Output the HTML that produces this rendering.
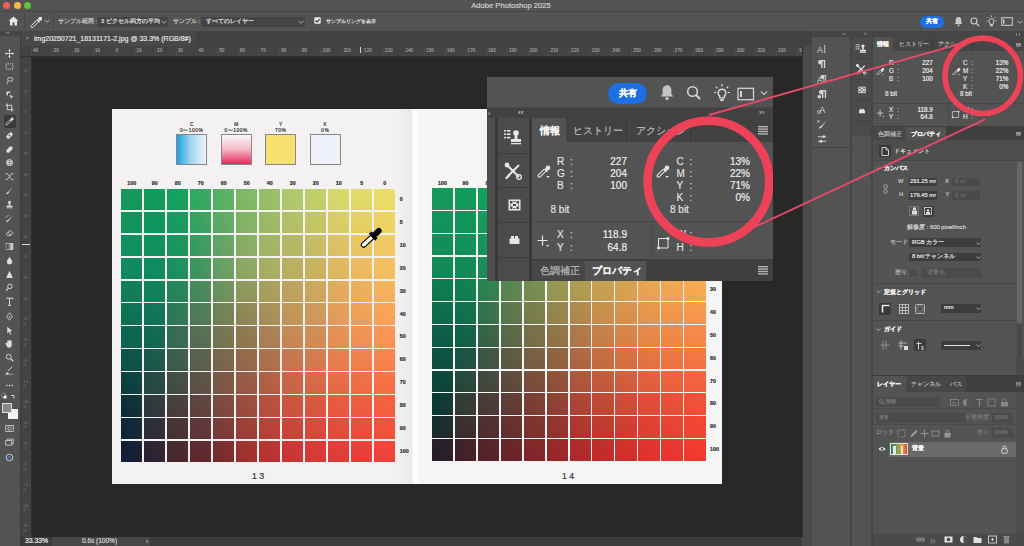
<!DOCTYPE html>
<html><head><meta charset="utf-8">
<style>
*{margin:0;padding:0;box-sizing:border-box}
html,body{width:1024px;height:546px;overflow:hidden;background:#282828;font-family:"Liberation Sans",sans-serif;color:#d8d8d8;position:relative}
.a{position:absolute}
.t{position:absolute;white-space:nowrap;line-height:1;-webkit-text-stroke:0.18px currentColor}
.cl{position:absolute;width:21.4px;height:21.3px}
</style></head><body>

<div class="a" style="left:0px;top:0px;width:1024px;height:11px;background:#535353;"></div>
<div class="a" style="left:3.0px;top:1.8px;width:7px;height:7px;background:#ee5f57;border-radius:50%"></div>
<div class="a" style="left:13.5px;top:1.8px;width:7px;height:7px;background:#f5bd3c;border-radius:50%"></div>
<div class="a" style="left:24.0px;top:1.8px;width:7px;height:7px;background:#5fc53f;border-radius:50%"></div>
<div class="t" style="left:361px;width:300px;text-align:center;top:2.00px;font-size:7.6px;color:#d2d2d2;">Adobe Photoshop 2025</div>
<div class="a" style="left:0px;top:11px;width:1024px;height:20px;background:#535353;"></div>
<div class="a" style="left:0px;top:10.8px;width:1024px;height:1.2px;background:#474747;"></div>
<div class="a" style="left:0px;top:30.6px;width:1024px;height:0.8px;background:#454545;"></div>
<svg class="a" style="left:8px;top:16px" width="11" height="10" viewBox="0 0 11 10"><path d="M5.5 0.5L0.5 5h1.5v4.5h2.5V6.5h2v3h2.5V5h1.5z" fill="#e8e8e8"/></svg>
<div class="a" style="left:24px;top:13px;width:0.8px;height:16px;background:#474747;"></div>
<svg class="a" style="left:30px;top:15.5px" width="12" height="12" viewBox="0 0 12 12"><circle cx="10.3" cy="2.8" r="2" fill="#e6e6e6"/><path d="M7 3.6l2.6 2.6" stroke="#e6e6e6" stroke-width="1.8"/><path d="M8.1 6.2L3 11.3a1.2 1.2 0 0 1-1.7-1.7L6.4 4.5" fill="none" stroke="#e6e6e6" stroke-width="1"/></svg>
<svg class="a" style="left:44px;top:19px" width="6" height="4" viewBox="0 0 6 4"><path d="M0.5 0.8l2.5 2.5 2.5-2.5" fill="none" stroke="#bbb" stroke-width="0.9"/></svg>
<div class="a" style="left:53px;top:13px;width:0.8px;height:16px;background:#474747;"></div>
<div class="t" style="left:58px;top:18.90px;font-size:5.6px;color:#c8c8c8;">サンプル範囲 :</div>
<div class="a" style="left:97px;top:16.5px;width:71px;height:10px;background:#444444;border-radius:1.5px"></div>
<div class="t" style="left:101px;top:19.15px;font-size:5.5px;color:#e6e6e6;">3 ピクセル四方の平均</div>
<svg class="a" style="left:161px;top:20px" width="6" height="4" viewBox="0 0 6 4"><path d="M0.5 0.8l2.5 2.5 2.5-2.5" fill="none" stroke="#bbb" stroke-width="0.9"/></svg>
<div class="t" style="left:173px;top:18.90px;font-size:5.6px;color:#c8c8c8;">サンプル :</div>
<div class="a" style="left:201px;top:16.5px;width:104px;height:10px;background:#444444;border-radius:1.5px"></div>
<div class="t" style="left:205.5px;top:19.15px;font-size:5.5px;color:#e6e6e6;">すべてのレイヤー</div>
<svg class="a" style="left:298px;top:20px" width="6" height="4" viewBox="0 0 6 4"><path d="M0.5 0.8l2.5 2.5 2.5-2.5" fill="none" stroke="#bbb" stroke-width="0.9"/></svg>
<svg class="a" style="left:314px;top:17.3px" width="7" height="7" viewBox="0 0 7 7"><rect x="0.3" y="0.3" width="6.4" height="6.4" rx="1" fill="#e8e8e8"/><path d="M1.6 3.5l1.4 1.4 2.6-2.8" fill="none" stroke="#333" stroke-width="1.1"/></svg>
<div class="t" style="left:325.5px;top:19.00px;font-size:5.4px;color:#e6e6e6;">サンプルリングを表示</div>
<div class="a" style="left:920px;top:16px;width:24px;height:11.5px;background:#1d6fe3;border-radius:6px"></div>
<div class="t" style="left:782px;width:300px;text-align:center;top:18.90px;font-size:5.8px;color:#fff;font-weight:bold">共有</div>
<svg class="a" style="left:953.5px;top:15.5px" width="9" height="11" viewBox="0 0 9 11"><path d="M4.5 1c-1.8 0-2.8 1.4-2.8 3v2.5L0.8 8h7.4L7.3 6.5V4C7.3 2.4 6.3 1 4.5 1z" fill="#c8c8c8"/><circle cx="4.5" cy="9.3" r="1" fill="#c8c8c8"/></svg>
<svg class="a" style="left:970px;top:16.5px" width="10" height="10" viewBox="0 0 10 10"><circle cx="4" cy="4" r="3" fill="none" stroke="#d0d0d0" stroke-width="1.1"/><path d="M6.3 6.3L9 9" stroke="#d0d0d0" stroke-width="1.2"/></svg>
<svg class="a" style="left:986px;top:15px" width="11" height="12" viewBox="0 0 11 12"><path d="M5.5 3.6a2.5 2.5 0 0 0-1.5 4.5v1.3h3V8.1A2.5 2.5 0 0 0 5.5 3.6z" fill="none" stroke="#d8d8d8" stroke-width="0.9"/><rect x="4.3" y="10" width="2.4" height="1.3" fill="#d8d8d8"/><path d="M5.5 0.5v1.5M1.5 2l1 1M9.5 2l-1 1M0.5 6h1.3M9.2 6h1.3" stroke="#d8d8d8" stroke-width="0.8"/></svg>
<svg class="a" style="left:1001px;top:17px" width="12" height="9" viewBox="0 0 12 9"><rect x="0.7" y="0.7" width="10.6" height="7.6" fill="none" stroke="#d0d0d0" stroke-width="1"/><rect x="2" y="2.3" width="1.4" height="4.4" fill="#d0d0d0"/></svg>
<svg class="a" style="left:1017px;top:19.5px" width="6" height="4" viewBox="0 0 6 4"><path d="M0.5 0.8l2.5 2.5 2.5-2.5" fill="none" stroke="#bbb" stroke-width="0.9"/></svg>
<div class="a" style="left:0px;top:31px;width:20px;height:515px;background:#535353;"></div>
<div class="a" style="left:0px;top:31px;width:20px;height:5px;background:#454545;"></div>
<div class="t" style="left:6px;top:31.25px;font-size:4.5px;color:#999;">››</div>
<div class="a" style="left:20px;top:31px;width:1px;height:515px;background:#3a3a3a;"></div>
<div class="a" style="left:4px;top:115px;width:12px;height:13px;background:#3a3a3a;border-radius:1.5px"></div>
<svg class="a" style="left:4.5px;top:48.7px" width="9" height="9" viewBox="0 0 12 12"><path d="M6 1v10M1 6h10" stroke="#dcdcdc" stroke-width="1.3"/><path d="M6 0l2 2H4zM6 12l2-2H4zM0 6l2-2v4zM12 6l-2-2v4z" fill="#dcdcdc"/></svg>
<svg class="a" style="left:4.5px;top:61.5px" width="9" height="9" viewBox="0 0 12 12"><rect x="1.5" y="2.5" width="9" height="7" fill="none" stroke="#dcdcdc" stroke-width="1.1" stroke-dasharray="1.6 1"/></svg>
<svg class="a" style="left:4.5px;top:75.7px" width="9" height="9" viewBox="0 0 12 12"><ellipse cx="7" cy="4.5" rx="3.5" ry="2.6" fill="none" stroke="#dcdcdc" stroke-width="1.1"/><path d="M4 6.5c-1 1.5-2 3-1 4.5" fill="none" stroke="#dcdcdc" stroke-width="1.1"/></svg>
<svg class="a" style="left:4.5px;top:89.5px" width="9" height="9" viewBox="0 0 12 12"><path d="M2 2h5v2H4v3H2z" fill="#dcdcdc"/><path d="M6 6l5 3-2 .5-1 2z" fill="#dcdcdc"/></svg>
<svg class="a" style="left:4.5px;top:103.2px" width="9" height="9" viewBox="0 0 12 12"><path d="M3 0.5v8.5h8.5M0.5 3h8.5v8.5" fill="none" stroke="#dcdcdc" stroke-width="1.2"/></svg>
<svg class="a" style="left:4.5px;top:117.0px" width="9" height="9" viewBox="0 0 12 12"><circle cx="9.6" cy="2.6" r="1.9" fill="#dcdcdc"/><path d="M6.5 3.4l2.4 2.4" stroke="#dcdcdc" stroke-width="1.7"/><path d="M7.6 5.8L3 10.4a1.1 1.1 0 0 1-1.6-1.6L6 4.2" fill="none" stroke="#dcdcdc" stroke-width="1"/></svg>
<svg class="a" style="left:4.5px;top:131.0px" width="9" height="9" viewBox="0 0 12 12"><rect x="3.5" y="1" width="5" height="10" rx="2.5" transform="rotate(45 6 6)" fill="#dcdcdc"/><path d="M4.5 6h3M6 4.5v3" stroke="#535353" stroke-width="0.8"/></svg>
<svg class="a" style="left:4.5px;top:144.5px" width="9" height="9" viewBox="0 0 12 12"><rect x="3.5" y="1" width="5" height="10" rx="2.5" transform="rotate(45 6 6)" fill="#dcdcdc"/></svg>
<svg class="a" style="left:4.5px;top:158.0px" width="9" height="9" viewBox="0 0 12 12"><circle cx="6" cy="6" r="4.5" fill="#dcdcdc"/><path d="M2 6h8M6 2v8M3 3.5h6M3 8.5h6" stroke="#535353" stroke-width="0.6"/></svg>
<svg class="a" style="left:4.5px;top:172.0px" width="9" height="9" viewBox="0 0 12 12"><path d="M1 2c3 0 4 2 5 4s2 4 5 4M1 10c3 0 4-2 5-4s2-4 5-4" fill="none" stroke="#dcdcdc" stroke-width="1.2"/></svg>
<svg class="a" style="left:4.5px;top:186.0px" width="9" height="9" viewBox="0 0 12 12"><path d="M10.5 1L5 7l-1 1c-1 0-2 1-2.5 3 2 0 3-1 3.5-2l.5-1z" fill="#dcdcdc"/></svg>
<svg class="a" style="left:4.5px;top:200.0px" width="9" height="9" viewBox="0 0 12 12"><circle cx="6" cy="3" r="2" fill="#dcdcdc"/><rect x="5" y="4.5" width="2" height="3" fill="#dcdcdc"/><rect x="2" y="7.5" width="8" height="2" fill="#dcdcdc"/><rect x="2" y="10" width="8" height="1" fill="#dcdcdc"/></svg>
<svg class="a" style="left:4.5px;top:214.0px" width="9" height="9" viewBox="0 0 12 12"><path d="M10.5 1L5 7l-1 1c-1 0-2 1-2.5 3 2 0 3-1 3.5-2l.5-1z" fill="#dcdcdc"/><path d="M1 5l4-4" stroke="#dcdcdc" stroke-width="1"/></svg>
<svg class="a" style="left:4.5px;top:228.0px" width="9" height="9" viewBox="0 0 12 12"><path d="M1.5 8l5-5 4 4-3 3H3.5z" fill="none" stroke="#dcdcdc" stroke-width="1.1"/><path d="M4 5.5l4 4" stroke="#dcdcdc" stroke-width="1.1"/></svg>
<svg class="a" style="left:4.5px;top:242.0px" width="9" height="9" viewBox="0 0 12 12"><defs><linearGradient id="gg"><stop offset="0" stop-color="#222"/><stop offset="1" stop-color="#eee"/></linearGradient></defs><rect x="1.5" y="2" width="9" height="8" fill="url(#gg)" stroke="#dcdcdc" stroke-width="0.8"/></svg>
<svg class="a" style="left:4.5px;top:256.0px" width="9" height="9" viewBox="0 0 12 12"><path d="M6 1c1 2 3.5 4.5 3.5 6.5a3.5 3.5 0 0 1-7 0C2.5 5.5 5 3 6 1z" fill="#dcdcdc"/></svg>
<svg class="a" style="left:4.5px;top:270.0px" width="9" height="9" viewBox="0 0 12 12"><path d="M6 1l4.5 9.5h-9z" fill="#dcdcdc"/></svg>
<svg class="a" style="left:4.5px;top:283.0px" width="9" height="9" viewBox="0 0 12 12"><circle cx="6.5" cy="4.5" r="3" fill="none" stroke="#dcdcdc" stroke-width="1.2"/><path d="M4.5 7L1.5 10.5" stroke="#dcdcdc" stroke-width="1.5"/></svg>
<svg class="a" style="left:4.5px;top:297.0px" width="9" height="9" viewBox="0 0 12 12"><path d="M1.5 1.5h9v2M6 1.5v9.5M4 11h4" fill="none" stroke="#dcdcdc" stroke-width="1.3"/></svg>
<svg class="a" style="left:4.5px;top:311.9px" width="9" height="9" viewBox="0 0 12 12"><path d="M6 1l4 5-4 5-4-5z" fill="none" stroke="#dcdcdc" stroke-width="1.1"/><circle cx="6" cy="6.5" r="1" fill="#dcdcdc"/></svg>
<svg class="a" style="left:4.5px;top:325.8px" width="9" height="9" viewBox="0 0 12 12"><path d="M3 1l7 6H6.5l2 4-1.3.6-2-4L3 10z" fill="#dcdcdc"/></svg>
<svg class="a" style="left:4.5px;top:339.0px" width="9" height="9" viewBox="0 0 12 12"><path d="M3 6V3a1 1 0 0 1 2 0V2a1 1 0 0 1 2 0v1a1 1 0 0 1 2 0v5c0 2-1 3.5-3.5 3.5S2.5 10 1.5 8l-1-2a1 1 0 0 1 1.6-.8z" fill="#dcdcdc"/></svg>
<svg class="a" style="left:4.5px;top:353.2px" width="9" height="9" viewBox="0 0 12 12"><circle cx="5" cy="5" r="3.3" fill="none" stroke="#dcdcdc" stroke-width="1.2"/><path d="M7.5 7.5L11 11" stroke="#dcdcdc" stroke-width="1.6"/></svg>
<svg class="a" style="left:4.5px;top:366.4px" width="9" height="9" viewBox="0 0 12 12"><path d="M9.5 1L4 6.5M3 8l-1.5 3L5 9.5" fill="none" stroke="#dcdcdc" stroke-width="1.3"/><path d="M1 11h10" stroke="#dcdcdc" stroke-width="0.8"/></svg>
<svg class="a" style="left:4.5px;top:381.2px" width="9" height="9" viewBox="0 0 12 12"><circle cx="2.5" cy="6" r="1.1" fill="#dcdcdc"/><circle cx="6" cy="6" r="1.1" fill="#dcdcdc"/><circle cx="9.5" cy="6" r="1.1" fill="#dcdcdc"/></svg>
<svg class="a" style="left:4.5px;top:423.5px" width="9" height="9" viewBox="0 0 12 12"><rect x="1" y="2" width="10" height="8" fill="none" stroke="#dcdcdc" stroke-width="1"/><circle cx="6" cy="6" r="2.3" fill="none" stroke="#dcdcdc" stroke-width="1"/></svg>
<svg class="a" style="left:4.5px;top:437.5px" width="9" height="9" viewBox="0 0 12 12"><rect x="1" y="3.5" width="8" height="6" fill="none" stroke="#dcdcdc" stroke-width="1"/><path d="M3 3.5V1.5h8v6H9" fill="none" stroke="#dcdcdc" stroke-width="1"/></svg>
<svg class="a" style="left:4.5px;top:452.5px" width="9" height="9" viewBox="0 0 12 12"><circle cx="6" cy="6" r="4.5" fill="none" stroke="#dcdcdc" stroke-width="1.1"/><path d="M3 8l3-4 3 4" fill="none" stroke="#4a90e2" stroke-width="1.3"/></svg>
<svg class="a" style="left:1px;top:392.5px" width="16" height="8" viewBox="0 0 16 8"><rect x="1" y="1" width="3" height="3" fill="#111" stroke="#ddd" stroke-width="0.5"/><rect x="2.5" y="2.5" width="3" height="3" fill="#fff"/><path d="M10 2.5h3v3" fill="none" stroke="#ddd" stroke-width="0.9"/></svg>
<div class="a" style="left:7.5px;top:409px;width:10px;height:9.5px;background:#f4f4f4;"></div>
<div class="a" style="left:2px;top:403px;width:10px;height:10px;background:#8a8a8a;border:0.8px solid #ddd"></div>
<div class="a" style="left:21px;top:31px;width:791px;height:15px;background:#424242;"></div>
<div class="a" style="left:21px;top:31px;width:175px;height:15px;background:#484848;"></div>
<div class="t" style="left:26px;top:36.00px;font-size:5px;color:#888;">×</div>
<div class="t" style="left:34px;top:34.80px;font-size:7px;color:#e6e6e6;">img20250721_18131171-2.jpg @ 33.3% (RGB/8#)</div>
<div class="a" style="left:21px;top:46px;width:781px;height:10px;background:#434343;"></div>
<div class="a" style="left:21px;top:56px;width:10px;height:481px;background:#434343;"></div>
<div class="a" style="left:21px;top:55.5px;width:781px;height:0.8px;background:#2f2f2f;"></div>
<div class="a" style="left:30.5px;top:56px;width:0.8px;height:481px;background:#2f2f2f;"></div>
<div class="t" style="left:32.9px;top:48.5px;font-size:4.6px;color:#9c9c9c">40</div>
<div class="t" style="left:53.6px;top:48.5px;font-size:4.6px;color:#9c9c9c">30</div>
<div class="t" style="left:74.3px;top:48.5px;font-size:4.6px;color:#9c9c9c">20</div>
<div class="t" style="left:95.0px;top:48.5px;font-size:4.6px;color:#9c9c9c">10</div>
<div class="t" style="left:115.7px;top:48.5px;font-size:4.6px;color:#9c9c9c">0</div>
<div class="t" style="left:136.4px;top:48.5px;font-size:4.6px;color:#9c9c9c">10</div>
<div class="t" style="left:157.1px;top:48.5px;font-size:4.6px;color:#9c9c9c">20</div>
<div class="t" style="left:177.8px;top:48.5px;font-size:4.6px;color:#9c9c9c">30</div>
<div class="t" style="left:198.5px;top:48.5px;font-size:4.6px;color:#9c9c9c">40</div>
<div class="t" style="left:219.2px;top:48.5px;font-size:4.6px;color:#9c9c9c">50</div>
<div class="t" style="left:239.9px;top:48.5px;font-size:4.6px;color:#9c9c9c">60</div>
<div class="t" style="left:260.6px;top:48.5px;font-size:4.6px;color:#9c9c9c">70</div>
<div class="t" style="left:281.3px;top:48.5px;font-size:4.6px;color:#9c9c9c">80</div>
<div class="t" style="left:302.0px;top:48.5px;font-size:4.6px;color:#9c9c9c">90</div>
<div class="t" style="left:322.7px;top:48.5px;font-size:4.6px;color:#9c9c9c">100</div>
<div class="t" style="left:343.4px;top:48.5px;font-size:4.6px;color:#9c9c9c">110</div>
<div class="t" style="left:364.1px;top:48.5px;font-size:4.6px;color:#9c9c9c">120</div>
<div class="t" style="left:384.8px;top:48.5px;font-size:4.6px;color:#9c9c9c">130</div>
<div class="t" style="left:405.5px;top:48.5px;font-size:4.6px;color:#9c9c9c">140</div>
<div class="t" style="left:426.2px;top:48.5px;font-size:4.6px;color:#9c9c9c">150</div>
<div class="t" style="left:446.9px;top:48.5px;font-size:4.6px;color:#9c9c9c">160</div>
<div class="t" style="left:467.6px;top:48.5px;font-size:4.6px;color:#9c9c9c">170</div>
<div class="t" style="left:488.3px;top:48.5px;font-size:4.6px;color:#9c9c9c">180</div>
<div class="t" style="left:509.0px;top:48.5px;font-size:4.6px;color:#9c9c9c">190</div>
<div class="t" style="left:529.7px;top:48.5px;font-size:4.6px;color:#9c9c9c">200</div>
<div class="t" style="left:550.4px;top:48.5px;font-size:4.6px;color:#9c9c9c">210</div>
<div class="t" style="left:571.1px;top:48.5px;font-size:4.6px;color:#9c9c9c">220</div>
<div class="t" style="left:591.8px;top:48.5px;font-size:4.6px;color:#9c9c9c">230</div>
<div class="t" style="left:612.5px;top:48.5px;font-size:4.6px;color:#9c9c9c">240</div>
<div class="t" style="left:633.2px;top:48.5px;font-size:4.6px;color:#9c9c9c">250</div>
<div class="t" style="left:653.9px;top:48.5px;font-size:4.6px;color:#9c9c9c">260</div>
<div class="t" style="left:674.6px;top:48.5px;font-size:4.6px;color:#9c9c9c">270</div>
<div class="t" style="left:695.3px;top:48.5px;font-size:4.6px;color:#9c9c9c">280</div>
<div class="t" style="left:716.0px;top:48.5px;font-size:4.6px;color:#9c9c9c">290</div>
<div class="t" style="left:736.7px;top:48.5px;font-size:4.6px;color:#9c9c9c">300</div>
<div class="t" style="left:757.4px;top:48.5px;font-size:4.6px;color:#9c9c9c">310</div>
<div class="t" style="left:778.1px;top:48.5px;font-size:4.6px;color:#9c9c9c">320</div>
<div class="t" style="left:798.8px;top:48.5px;font-size:4.6px;color:#9c9c9c">330</div>
<div class="t" style="left:23.5px;top:69.0px;font-size:4.2px;color:#666;width:5px;word-break:break-all;white-space:normal;line-height:4.6px">20</div>
<div class="t" style="left:23.5px;top:89.7px;font-size:4.2px;color:#666;width:5px;word-break:break-all;white-space:normal;line-height:4.6px">10</div>
<div class="t" style="left:23.5px;top:110.4px;font-size:4.2px;color:#666;width:5px;word-break:break-all;white-space:normal;line-height:4.6px">0</div>
<div class="t" style="left:23.5px;top:131.1px;font-size:4.2px;color:#666;width:5px;word-break:break-all;white-space:normal;line-height:4.6px">10</div>
<div class="t" style="left:23.5px;top:151.8px;font-size:4.2px;color:#666;width:5px;word-break:break-all;white-space:normal;line-height:4.6px">20</div>
<div class="t" style="left:23.5px;top:172.5px;font-size:4.2px;color:#666;width:5px;word-break:break-all;white-space:normal;line-height:4.6px">30</div>
<div class="t" style="left:23.5px;top:193.2px;font-size:4.2px;color:#666;width:5px;word-break:break-all;white-space:normal;line-height:4.6px">40</div>
<div class="t" style="left:23.5px;top:213.9px;font-size:4.2px;color:#666;width:5px;word-break:break-all;white-space:normal;line-height:4.6px">50</div>
<div class="t" style="left:23.5px;top:234.6px;font-size:4.2px;color:#666;width:5px;word-break:break-all;white-space:normal;line-height:4.6px">60</div>
<div class="t" style="left:23.5px;top:255.3px;font-size:4.2px;color:#666;width:5px;word-break:break-all;white-space:normal;line-height:4.6px">70</div>
<div class="t" style="left:23.5px;top:276.0px;font-size:4.2px;color:#666;width:5px;word-break:break-all;white-space:normal;line-height:4.6px">80</div>
<div class="t" style="left:23.5px;top:296.7px;font-size:4.2px;color:#666;width:5px;word-break:break-all;white-space:normal;line-height:4.6px">90</div>
<div class="t" style="left:23.5px;top:317.4px;font-size:4.2px;color:#666;width:5px;word-break:break-all;white-space:normal;line-height:4.6px">100</div>
<div class="t" style="left:23.5px;top:338.1px;font-size:4.2px;color:#666;width:5px;word-break:break-all;white-space:normal;line-height:4.6px">110</div>
<div class="t" style="left:23.5px;top:358.8px;font-size:4.2px;color:#666;width:5px;word-break:break-all;white-space:normal;line-height:4.6px">120</div>
<div class="t" style="left:23.5px;top:379.5px;font-size:4.2px;color:#666;width:5px;word-break:break-all;white-space:normal;line-height:4.6px">130</div>
<div class="t" style="left:23.5px;top:400.2px;font-size:4.2px;color:#666;width:5px;word-break:break-all;white-space:normal;line-height:4.6px">140</div>
<div class="t" style="left:23.5px;top:420.9px;font-size:4.2px;color:#666;width:5px;word-break:break-all;white-space:normal;line-height:4.6px">150</div>
<div class="t" style="left:23.5px;top:441.6px;font-size:4.2px;color:#666;width:5px;word-break:break-all;white-space:normal;line-height:4.6px">160</div>
<div class="t" style="left:23.5px;top:462.3px;font-size:4.2px;color:#666;width:5px;word-break:break-all;white-space:normal;line-height:4.6px">170</div>
<div class="t" style="left:23.5px;top:483.0px;font-size:4.2px;color:#666;width:5px;word-break:break-all;white-space:normal;line-height:4.6px">180</div>
<div class="t" style="left:23.5px;top:503.7px;font-size:4.2px;color:#666;width:5px;word-break:break-all;white-space:normal;line-height:4.6px">190</div>
<div class="t" style="left:23.5px;top:524.4px;font-size:4.2px;color:#666;width:5px;word-break:break-all;white-space:normal;line-height:4.6px">200</div>
<svg class="a" style="left:0;top:0" width="1024" height="546"><path d="M31.4 49V56" stroke="#5c5c5c" stroke-width="0.5"/><path d="M52.1 49V56" stroke="#5c5c5c" stroke-width="0.5"/><path d="M72.8 49V56" stroke="#5c5c5c" stroke-width="0.5"/><path d="M93.5 49V56" stroke="#5c5c5c" stroke-width="0.5"/><path d="M114.2 49V56" stroke="#5c5c5c" stroke-width="0.5"/><path d="M134.9 49V56" stroke="#5c5c5c" stroke-width="0.5"/><path d="M155.6 49V56" stroke="#5c5c5c" stroke-width="0.5"/><path d="M176.3 49V56" stroke="#5c5c5c" stroke-width="0.5"/><path d="M197.0 49V56" stroke="#5c5c5c" stroke-width="0.5"/><path d="M217.7 49V56" stroke="#5c5c5c" stroke-width="0.5"/><path d="M238.4 49V56" stroke="#5c5c5c" stroke-width="0.5"/><path d="M259.1 49V56" stroke="#5c5c5c" stroke-width="0.5"/><path d="M279.8 49V56" stroke="#5c5c5c" stroke-width="0.5"/><path d="M300.5 49V56" stroke="#5c5c5c" stroke-width="0.5"/><path d="M321.2 49V56" stroke="#5c5c5c" stroke-width="0.5"/><path d="M341.9 49V56" stroke="#5c5c5c" stroke-width="0.5"/><path d="M362.6 49V56" stroke="#5c5c5c" stroke-width="0.5"/><path d="M383.3 49V56" stroke="#5c5c5c" stroke-width="0.5"/><path d="M404.0 49V56" stroke="#5c5c5c" stroke-width="0.5"/><path d="M424.7 49V56" stroke="#5c5c5c" stroke-width="0.5"/><path d="M445.4 49V56" stroke="#5c5c5c" stroke-width="0.5"/><path d="M466.1 49V56" stroke="#5c5c5c" stroke-width="0.5"/><path d="M486.8 49V56" stroke="#5c5c5c" stroke-width="0.5"/><path d="M507.5 49V56" stroke="#5c5c5c" stroke-width="0.5"/><path d="M528.2 49V56" stroke="#5c5c5c" stroke-width="0.5"/><path d="M548.9 49V56" stroke="#5c5c5c" stroke-width="0.5"/><path d="M569.6 49V56" stroke="#5c5c5c" stroke-width="0.5"/><path d="M590.3 49V56" stroke="#5c5c5c" stroke-width="0.5"/><path d="M611.0 49V56" stroke="#5c5c5c" stroke-width="0.5"/><path d="M631.7 49V56" stroke="#5c5c5c" stroke-width="0.5"/><path d="M652.4 49V56" stroke="#5c5c5c" stroke-width="0.5"/><path d="M673.1 49V56" stroke="#5c5c5c" stroke-width="0.5"/><path d="M693.8 49V56" stroke="#5c5c5c" stroke-width="0.5"/><path d="M714.5 49V56" stroke="#5c5c5c" stroke-width="0.5"/><path d="M735.2 49V56" stroke="#5c5c5c" stroke-width="0.5"/><path d="M755.9 49V56" stroke="#5c5c5c" stroke-width="0.5"/><path d="M776.6 49V56" stroke="#5c5c5c" stroke-width="0.5"/><path d="M797.3 49V56" stroke="#5c5c5c" stroke-width="0.5"/><path d="M26 67.0H31" stroke="#555" stroke-width="0.5"/><path d="M26 87.7H31" stroke="#555" stroke-width="0.5"/><path d="M26 108.4H31" stroke="#555" stroke-width="0.5"/><path d="M26 129.1H31" stroke="#555" stroke-width="0.5"/><path d="M26 149.8H31" stroke="#555" stroke-width="0.5"/><path d="M26 170.5H31" stroke="#555" stroke-width="0.5"/><path d="M26 191.2H31" stroke="#555" stroke-width="0.5"/><path d="M26 211.9H31" stroke="#555" stroke-width="0.5"/><path d="M26 232.6H31" stroke="#555" stroke-width="0.5"/><path d="M26 253.3H31" stroke="#555" stroke-width="0.5"/><path d="M26 274.0H31" stroke="#555" stroke-width="0.5"/><path d="M26 294.7H31" stroke="#555" stroke-width="0.5"/><path d="M26 315.4H31" stroke="#555" stroke-width="0.5"/><path d="M26 336.1H31" stroke="#555" stroke-width="0.5"/><path d="M26 356.8H31" stroke="#555" stroke-width="0.5"/><path d="M26 377.5H31" stroke="#555" stroke-width="0.5"/><path d="M26 398.2H31" stroke="#555" stroke-width="0.5"/><path d="M26 418.9H31" stroke="#555" stroke-width="0.5"/><path d="M26 439.6H31" stroke="#555" stroke-width="0.5"/><path d="M26 460.3H31" stroke="#555" stroke-width="0.5"/><path d="M26 481.0H31" stroke="#555" stroke-width="0.5"/><path d="M26 501.7H31" stroke="#555" stroke-width="0.5"/><path d="M26 522.4H31" stroke="#555" stroke-width="0.5"/></svg>
<div class="a" style="left:360px;top:47px;width:1.1px;height:6px;background:#d0d0d0;"></div>
<div class="a" style="left:21.5px;top:243.9px;width:8px;height:1.1px;background:#d0d0d0;"></div>
<div class="a" style="left:21px;top:537px;width:781px;height:9px;background:#3c3c3c;"></div>
<div class="a" style="left:52px;top:537px;width:98px;height:9px;background:#474747;"></div>
<div class="t" style="left:25px;top:538.30px;font-size:6.8px;color:#ececec;">33.33%</div>
<div class="t" style="left:82px;top:538.45px;font-size:6.5px;color:#d8d8d8;">0.6s (100%)</div>
<div class="t" style="left:146px;top:538.20px;font-size:7px;color:#bbb;">›</div>
<div class="a" style="left:802px;top:46px;width:10px;height:500px;background:#4a4a4a;"></div>
<div class="a" style="left:801.5px;top:46px;width:1.2px;height:491px;background:#303030;"></div>
<div class="a" style="left:111.5px;top:108.7px;width:304px;height:375.8px;background:#f3f1f1;"></div>
<div class="a" style="left:415.5px;top:108.7px;width:306px;height:375.8px;background:#f5f5f5;"></div>
<div class="a" style="left:396px;top:108.7px;width:24px;height:375.8px;background:linear-gradient(90deg,rgba(243,241,241,0),#ebe9ea 65%,#fcfcfc 72%,#fdfdfd 82%,rgba(245,245,245,0));"></div>
<div class="cl" style="left:121.00px;top:188.70px;width:21.4px;height:21.3px;background:linear-gradient(90deg,#14965c,#13975c)"><div style="position:absolute;inset:0;background:linear-gradient(90deg,#15995c,#149a5b);-webkit-mask-image:linear-gradient(#000,transparent);mask-image:linear-gradient(#000,transparent)"></div></div>
<div class="cl" style="left:144.00px;top:188.70px;width:21.4px;height:21.3px;background:linear-gradient(90deg,#11985b,#119a5b)"><div style="position:absolute;inset:0;background:linear-gradient(90deg,#129b5a,#119d5a);-webkit-mask-image:linear-gradient(#000,transparent);mask-image:linear-gradient(#000,transparent)"></div></div>
<div class="cl" style="left:167.00px;top:188.70px;width:21.4px;height:21.3px;background:linear-gradient(90deg,#129d5e,#1ba05f)"><div style="position:absolute;inset:0;background:linear-gradient(90deg,#12a05d,#19a35f);-webkit-mask-image:linear-gradient(#000,transparent);mask-image:linear-gradient(#000,transparent)"></div></div>
<div class="cl" style="left:190.00px;top:188.70px;width:21.4px;height:21.3px;background:linear-gradient(90deg,#2ea561,#3ea862)"><div style="position:absolute;inset:0;background:linear-gradient(90deg,#2ca861,#3cab63);-webkit-mask-image:linear-gradient(#000,transparent);mask-image:linear-gradient(#000,transparent)"></div></div>
<div class="cl" style="left:213.00px;top:188.70px;width:21.4px;height:21.3px;background:linear-gradient(90deg,#53ad64,#64b165)"><div style="position:absolute;inset:0;background:linear-gradient(90deg,#51b065,#61b366);-webkit-mask-image:linear-gradient(#000,transparent);mask-image:linear-gradient(#000,transparent)"></div></div>
<div class="cl" style="left:236.00px;top:188.70px;width:21.4px;height:21.3px;background:linear-gradient(90deg,#79b567,#86b868)"><div style="position:absolute;inset:0;background:linear-gradient(90deg,#76b768,#84bb69);-webkit-mask-image:linear-gradient(#000,transparent);mask-image:linear-gradient(#000,transparent)"></div></div>
<div class="cl" style="left:259.00px;top:188.70px;width:21.4px;height:21.3px;background:linear-gradient(90deg,#94bb69,#9ebf6a)"><div style="position:absolute;inset:0;background:linear-gradient(90deg,#92be6a,#9cc26b);-webkit-mask-image:linear-gradient(#000,transparent);mask-image:linear-gradient(#000,transparent)"></div></div>
<div class="cl" style="left:282.00px;top:188.70px;width:21.4px;height:21.3px;background:linear-gradient(90deg,#acc46b,#b4c76b)"><div style="position:absolute;inset:0;background:linear-gradient(90deg,#aac76c,#b3cb6c);-webkit-mask-image:linear-gradient(#000,transparent);mask-image:linear-gradient(#000,transparent)"></div></div>
<div class="cl" style="left:305.00px;top:188.70px;width:21.4px;height:21.3px;background:linear-gradient(90deg,#bdc96a,#c6cc69)"><div style="position:absolute;inset:0;background:linear-gradient(90deg,#bccd6b,#c4d16b);-webkit-mask-image:linear-gradient(#000,transparent);mask-image:linear-gradient(#000,transparent)"></div></div>
<div class="cl" style="left:328.00px;top:188.70px;width:21.4px;height:21.3px;background:linear-gradient(90deg,#d4d369,#dbd669)"><div style="position:absolute;inset:0;background:linear-gradient(90deg,#d2d86b,#dadb6a);-webkit-mask-image:linear-gradient(#000,transparent);mask-image:linear-gradient(#000,transparent)"></div></div>
<div class="cl" style="left:351.00px;top:188.70px;width:21.4px;height:21.3px;background:linear-gradient(90deg,#e0d768,#e4d867)"><div style="position:absolute;inset:0;background:linear-gradient(90deg,#dfdc69,#e2dd69);-webkit-mask-image:linear-gradient(#000,transparent);mask-image:linear-gradient(#000,transparent)"></div></div>
<div class="cl" style="left:374.00px;top:188.70px;width:21.4px;height:21.3px;background:linear-gradient(90deg,#e8d967,#eadb67)"><div style="position:absolute;inset:0;background:linear-gradient(90deg,#e6de69,#e8df69);-webkit-mask-image:linear-gradient(#000,transparent);mask-image:linear-gradient(#000,transparent)"></div></div>
<div class="cl" style="left:121.00px;top:211.65px;width:21.4px;height:21.3px;background:linear-gradient(90deg,#13925d,#12935d)"><div style="position:absolute;inset:0;background:linear-gradient(90deg,#14935d,#13945d);-webkit-mask-image:linear-gradient(#000,transparent);mask-image:linear-gradient(#000,transparent)"></div></div>
<div class="cl" style="left:144.00px;top:211.65px;width:21.4px;height:21.3px;background:linear-gradient(90deg,#10945d,#11955d)"><div style="position:absolute;inset:0;background:linear-gradient(90deg,#11955c,#11975c);-webkit-mask-image:linear-gradient(#000,transparent);mask-image:linear-gradient(#000,transparent)"></div></div>
<div class="cl" style="left:167.00px;top:211.65px;width:21.4px;height:21.3px;background:linear-gradient(90deg,#14995f,#1e9b5f)"><div style="position:absolute;inset:0;background:linear-gradient(90deg,#149b5e,#1c9e5f);-webkit-mask-image:linear-gradient(#000,transparent);mask-image:linear-gradient(#000,transparent)"></div></div>
<div class="cl" style="left:190.00px;top:211.65px;width:21.4px;height:21.3px;background:linear-gradient(90deg,#319f61,#42a362)"><div style="position:absolute;inset:0;background:linear-gradient(90deg,#30a261,#41a562);-webkit-mask-image:linear-gradient(#000,transparent);mask-image:linear-gradient(#000,transparent)"></div></div>
<div class="cl" style="left:213.00px;top:211.65px;width:21.4px;height:21.3px;background:linear-gradient(90deg,#57a864,#69ab65)"><div style="position:absolute;inset:0;background:linear-gradient(90deg,#56aa64,#67ae65);-webkit-mask-image:linear-gradient(#000,transparent);mask-image:linear-gradient(#000,transparent)"></div></div>
<div class="cl" style="left:236.00px;top:211.65px;width:21.4px;height:21.3px;background:linear-gradient(90deg,#7eb067,#8cb367)"><div style="position:absolute;inset:0;background:linear-gradient(90deg,#7cb367,#89b567);-webkit-mask-image:linear-gradient(#000,transparent);mask-image:linear-gradient(#000,transparent)"></div></div>
<div class="cl" style="left:259.00px;top:211.65px;width:21.4px;height:21.3px;background:linear-gradient(90deg,#99b767,#a3b967)"><div style="position:absolute;inset:0;background:linear-gradient(90deg,#96b967,#a1bc68);-webkit-mask-image:linear-gradient(#000,transparent);mask-image:linear-gradient(#000,transparent)"></div></div>
<div class="cl" style="left:282.00px;top:211.65px;width:21.4px;height:21.3px;background:linear-gradient(90deg,#afbd68,#b7bf68)"><div style="position:absolute;inset:0;background:linear-gradient(90deg,#adc069,#b6c369);-webkit-mask-image:linear-gradient(#000,transparent);mask-image:linear-gradient(#000,transparent)"></div></div>
<div class="cl" style="left:305.00px;top:211.65px;width:21.4px;height:21.3px;background:linear-gradient(90deg,#c0c167,#c9c467)"><div style="position:absolute;inset:0;background:linear-gradient(90deg,#bfc568,#c8c867);-webkit-mask-image:linear-gradient(#000,transparent);mask-image:linear-gradient(#000,transparent)"></div></div>
<div class="cl" style="left:328.00px;top:211.65px;width:21.4px;height:21.3px;background:linear-gradient(90deg,#d6c967,#decc66)"><div style="position:absolute;inset:0;background:linear-gradient(90deg,#d5cd67,#dcd067);-webkit-mask-image:linear-gradient(#000,transparent);mask-image:linear-gradient(#000,transparent)"></div></div>
<div class="cl" style="left:351.00px;top:211.65px;width:21.4px;height:21.3px;background:linear-gradient(90deg,#e4cd65,#e7ce65)"><div style="position:absolute;inset:0;background:linear-gradient(90deg,#e2d266,#e6d365);-webkit-mask-image:linear-gradient(#000,transparent);mask-image:linear-gradient(#000,transparent)"></div></div>
<div class="cl" style="left:374.00px;top:211.65px;width:21.4px;height:21.3px;background:linear-gradient(90deg,#ebd065,#efd265)"><div style="position:absolute;inset:0;background:linear-gradient(90deg,#ead465,#ecd665);-webkit-mask-image:linear-gradient(#000,transparent);mask-image:linear-gradient(#000,transparent)"></div></div>
<div class="cl" style="left:121.00px;top:234.60px;width:21.4px;height:21.3px;background:linear-gradient(90deg,#128e5f,#118f5f)"><div style="position:absolute;inset:0;background:linear-gradient(90deg,#138f5f,#12905f);-webkit-mask-image:linear-gradient(#000,transparent);mask-image:linear-gradient(#000,transparent)"></div></div>
<div class="cl" style="left:144.00px;top:234.60px;width:21.4px;height:21.3px;background:linear-gradient(90deg,#10905e,#12915e)"><div style="position:absolute;inset:0;background:linear-gradient(90deg,#10915e,#11935e);-webkit-mask-image:linear-gradient(#000,transparent);mask-image:linear-gradient(#000,transparent)"></div></div>
<div class="cl" style="left:167.00px;top:234.60px;width:21.4px;height:21.3px;background:linear-gradient(90deg,#16935f,#20955f)"><div style="position:absolute;inset:0;background:linear-gradient(90deg,#15955f,#1f985f);-webkit-mask-image:linear-gradient(#000,transparent);mask-image:linear-gradient(#000,transparent)"></div></div>
<div class="cl" style="left:190.00px;top:234.60px;width:21.4px;height:21.3px;background:linear-gradient(90deg,#349961,#469d62)"><div style="position:absolute;inset:0;background:linear-gradient(90deg,#339c61,#44a062);-webkit-mask-image:linear-gradient(#000,transparent);mask-image:linear-gradient(#000,transparent)"></div></div>
<div class="cl" style="left:213.00px;top:234.60px;width:21.4px;height:21.3px;background:linear-gradient(90deg,#5da264,#6ea565)"><div style="position:absolute;inset:0;background:linear-gradient(90deg,#5ba564,#6ca865);-webkit-mask-image:linear-gradient(#000,transparent);mask-image:linear-gradient(#000,transparent)"></div></div>
<div class="cl" style="left:236.00px;top:234.60px;width:21.4px;height:21.3px;background:linear-gradient(90deg,#83aa66,#92ad65)"><div style="position:absolute;inset:0;background:linear-gradient(90deg,#81ad66,#8fb066);-webkit-mask-image:linear-gradient(#000,transparent);mask-image:linear-gradient(#000,transparent)"></div></div>
<div class="cl" style="left:259.00px;top:234.60px;width:21.4px;height:21.3px;background:linear-gradient(90deg,#9fb265,#a8b465)"><div style="position:absolute;inset:0;background:linear-gradient(90deg,#9cb565,#a6b765);-webkit-mask-image:linear-gradient(#000,transparent);mask-image:linear-gradient(#000,transparent)"></div></div>
<div class="cl" style="left:282.00px;top:234.60px;width:21.4px;height:21.3px;background:linear-gradient(90deg,#b2b665,#b9b764)"><div style="position:absolute;inset:0;background:linear-gradient(90deg,#b0b965,#b8bb65);-webkit-mask-image:linear-gradient(#000,transparent);mask-image:linear-gradient(#000,transparent)"></div></div>
<div class="cl" style="left:305.00px;top:234.60px;width:21.4px;height:21.3px;background:linear-gradient(90deg,#c2b963,#cbbc63)"><div style="position:absolute;inset:0;background:linear-gradient(90deg,#c1bd64,#cac064);-webkit-mask-image:linear-gradient(#000,transparent);mask-image:linear-gradient(#000,transparent)"></div></div>
<div class="cl" style="left:328.00px;top:234.60px;width:21.4px;height:21.3px;background:linear-gradient(90deg,#d8bf64,#e0c164)"><div style="position:absolute;inset:0;background:linear-gradient(90deg,#d7c365,#dfc665);-webkit-mask-image:linear-gradient(#000,transparent);mask-image:linear-gradient(#000,transparent)"></div></div>
<div class="cl" style="left:351.00px;top:234.60px;width:21.4px;height:21.3px;background:linear-gradient(90deg,#e7c363,#ebc563)"><div style="position:absolute;inset:0;background:linear-gradient(90deg,#e6c864,#e9c963);-webkit-mask-image:linear-gradient(#000,transparent);mask-image:linear-gradient(#000,transparent)"></div></div>
<div class="cl" style="left:374.00px;top:234.60px;width:21.4px;height:21.3px;background:linear-gradient(90deg,#efc663,#f3c863)"><div style="position:absolute;inset:0;background:linear-gradient(90deg,#edca63,#f1cc63);-webkit-mask-image:linear-gradient(#000,transparent);mask-image:linear-gradient(#000,transparent)"></div></div>
<div class="cl" style="left:121.00px;top:257.55px;width:21.4px;height:21.3px;background:linear-gradient(90deg,#11875f,#11885f)"><div style="position:absolute;inset:0;background:linear-gradient(90deg,#118b60,#118c60);-webkit-mask-image:linear-gradient(#000,transparent);mask-image:linear-gradient(#000,transparent)"></div></div>
<div class="cl" style="left:144.00px;top:257.55px;width:21.4px;height:21.3px;background:linear-gradient(90deg,#0f895f,#138a5f)"><div style="position:absolute;inset:0;background:linear-gradient(90deg,#0f8d60,#118e60);-webkit-mask-image:linear-gradient(#000,transparent);mask-image:linear-gradient(#000,transparent)"></div></div>
<div class="cl" style="left:167.00px;top:257.55px;width:21.4px;height:21.3px;background:linear-gradient(90deg,#198c5f,#258f5f)"><div style="position:absolute;inset:0;background:linear-gradient(90deg,#179060,#229360);-webkit-mask-image:linear-gradient(#000,transparent);mask-image:linear-gradient(#000,transparent)"></div></div>
<div class="cl" style="left:190.00px;top:257.55px;width:21.4px;height:21.3px;background:linear-gradient(90deg,#3a925f,#4b9560)"><div style="position:absolute;inset:0;background:linear-gradient(90deg,#379660,#499a61);-webkit-mask-image:linear-gradient(#000,transparent);mask-image:linear-gradient(#000,transparent)"></div></div>
<div class="cl" style="left:213.00px;top:257.55px;width:21.4px;height:21.3px;background:linear-gradient(90deg,#629b63,#739e64)"><div style="position:absolute;inset:0;background:linear-gradient(90deg,#609f64,#71a365);-webkit-mask-image:linear-gradient(#000,transparent);mask-image:linear-gradient(#000,transparent)"></div></div>
<div class="cl" style="left:236.00px;top:257.55px;width:21.4px;height:21.3px;background:linear-gradient(90deg,#88a364,#95a663)"><div style="position:absolute;inset:0;background:linear-gradient(90deg,#86a765,#94ab65);-webkit-mask-image:linear-gradient(#000,transparent);mask-image:linear-gradient(#000,transparent)"></div></div>
<div class="cl" style="left:259.00px;top:257.55px;width:21.4px;height:21.3px;background:linear-gradient(90deg,#a3ab62,#acad61)"><div style="position:absolute;inset:0;background:linear-gradient(90deg,#a2af63,#abb163);-webkit-mask-image:linear-gradient(#000,transparent);mask-image:linear-gradient(#000,transparent)"></div></div>
<div class="cl" style="left:282.00px;top:257.55px;width:21.4px;height:21.3px;background:linear-gradient(90deg,#b5ad61,#bcae61)"><div style="position:absolute;inset:0;background:linear-gradient(90deg,#b4b163,#bbb362);-webkit-mask-image:linear-gradient(#000,transparent);mask-image:linear-gradient(#000,transparent)"></div></div>
<div class="cl" style="left:305.00px;top:257.55px;width:21.4px;height:21.3px;background:linear-gradient(90deg,#c5b060,#ceb260)"><div style="position:absolute;inset:0;background:linear-gradient(90deg,#c4b561,#ccb761);-webkit-mask-image:linear-gradient(#000,transparent);mask-image:linear-gradient(#000,transparent)"></div></div>
<div class="cl" style="left:328.00px;top:257.55px;width:21.4px;height:21.3px;background:linear-gradient(90deg,#dcb461,#e3b661)"><div style="position:absolute;inset:0;background:linear-gradient(90deg,#dab962,#e2bb62);-webkit-mask-image:linear-gradient(#000,transparent);mask-image:linear-gradient(#000,transparent)"></div></div>
<div class="cl" style="left:351.00px;top:257.55px;width:21.4px;height:21.3px;background:linear-gradient(90deg,#eab860,#eeba5f)"><div style="position:absolute;inset:0;background:linear-gradient(90deg,#e8bd61,#edbf61);-webkit-mask-image:linear-gradient(#000,transparent);mask-image:linear-gradient(#000,transparent)"></div></div>
<div class="cl" style="left:374.00px;top:257.55px;width:21.4px;height:21.3px;background:linear-gradient(90deg,#f2bc5f,#f6bd5f)"><div style="position:absolute;inset:0;background:linear-gradient(90deg,#f1c161,#f5c361);-webkit-mask-image:linear-gradient(#000,transparent);mask-image:linear-gradient(#000,transparent)"></div></div>
<div class="cl" style="left:121.00px;top:280.50px;width:21.4px;height:21.3px;background:linear-gradient(90deg,#107a5a,#107c5a)"><div style="position:absolute;inset:0;background:linear-gradient(90deg,#10805c,#10815c);-webkit-mask-image:linear-gradient(#000,transparent);mask-image:linear-gradient(#000,transparent)"></div></div>
<div class="cl" style="left:144.00px;top:280.50px;width:21.4px;height:21.3px;background:linear-gradient(90deg,#0f7e5a,#157f5b)"><div style="position:absolute;inset:0;background:linear-gradient(90deg,#0f835c,#13845c);-webkit-mask-image:linear-gradient(#000,transparent);mask-image:linear-gradient(#000,transparent)"></div></div>
<div class="cl" style="left:167.00px;top:280.50px;width:21.4px;height:21.3px;background:linear-gradient(90deg,#21805b,#2f825b)"><div style="position:absolute;inset:0;background:linear-gradient(90deg,#1f865d,#2b885d);-webkit-mask-image:linear-gradient(#000,transparent);mask-image:linear-gradient(#000,transparent)"></div></div>
<div class="cl" style="left:190.00px;top:280.50px;width:21.4px;height:21.3px;background:linear-gradient(90deg,#42855b,#52885b)"><div style="position:absolute;inset:0;background:linear-gradient(90deg,#3e8b5d,#4f8e5e);-webkit-mask-image:linear-gradient(#000,transparent);mask-image:linear-gradient(#000,transparent)"></div></div>
<div class="cl" style="left:213.00px;top:280.50px;width:21.4px;height:21.3px;background:linear-gradient(90deg,#678d5c,#77905c)"><div style="position:absolute;inset:0;background:linear-gradient(90deg,#65935f,#769660);-webkit-mask-image:linear-gradient(#000,transparent);mask-image:linear-gradient(#000,transparent)"></div></div>
<div class="cl" style="left:236.00px;top:280.50px;width:21.4px;height:21.3px;background:linear-gradient(90deg,#89945c,#95965d)"><div style="position:absolute;inset:0;background:linear-gradient(90deg,#889a60,#959d5f);-webkit-mask-image:linear-gradient(#000,transparent);mask-image:linear-gradient(#000,transparent)"></div></div>
<div class="cl" style="left:259.00px;top:280.50px;width:21.4px;height:21.3px;background:linear-gradient(90deg,#a39b5d,#ad9d5d)"><div style="position:absolute;inset:0;background:linear-gradient(90deg,#a3a25f,#aca45f);-webkit-mask-image:linear-gradient(#000,transparent);mask-image:linear-gradient(#000,transparent)"></div></div>
<div class="cl" style="left:282.00px;top:280.50px;width:21.4px;height:21.3px;background:linear-gradient(90deg,#b99f5d,#c1a15d)"><div style="position:absolute;inset:0;background:linear-gradient(90deg,#b8a65f,#bfa75e);-webkit-mask-image:linear-gradient(#000,transparent);mask-image:linear-gradient(#000,transparent)"></div></div>
<div class="cl" style="left:305.00px;top:280.50px;width:21.4px;height:21.3px;background:linear-gradient(90deg,#c9a35d,#d1a55d)"><div style="position:absolute;inset:0;background:linear-gradient(90deg,#c7a95e,#d0ab5e);-webkit-mask-image:linear-gradient(#000,transparent);mask-image:linear-gradient(#000,transparent)"></div></div>
<div class="cl" style="left:328.00px;top:280.50px;width:21.4px;height:21.3px;background:linear-gradient(90deg,#dea75d,#e6a95d)"><div style="position:absolute;inset:0;background:linear-gradient(90deg,#ddad5e,#e5af5e);-webkit-mask-image:linear-gradient(#000,transparent);mask-image:linear-gradient(#000,transparent)"></div></div>
<div class="cl" style="left:351.00px;top:280.50px;width:21.4px;height:21.3px;background:linear-gradient(90deg,#ebab5c,#efac5b)"><div style="position:absolute;inset:0;background:linear-gradient(90deg,#eab15d,#eeb35d);-webkit-mask-image:linear-gradient(#000,transparent);mask-image:linear-gradient(#000,transparent)"></div></div>
<div class="cl" style="left:374.00px;top:280.50px;width:21.4px;height:21.3px;background:linear-gradient(90deg,#f4ad5b,#f7ae5b)"><div style="position:absolute;inset:0;background:linear-gradient(90deg,#f3b45d,#f6b55d);-webkit-mask-image:linear-gradient(#000,transparent);mask-image:linear-gradient(#000,transparent)"></div></div>
<div class="cl" style="left:121.00px;top:303.45px;width:21.4px;height:21.3px;background:linear-gradient(90deg,#0f6e54,#0f7055)"><div style="position:absolute;inset:0;background:linear-gradient(90deg,#0f7456,#0f7656);-webkit-mask-image:linear-gradient(#000,transparent);mask-image:linear-gradient(#000,transparent)"></div></div>
<div class="cl" style="left:144.00px;top:303.45px;width:21.4px;height:21.3px;background:linear-gradient(90deg,#0e7256,#177357)"><div style="position:absolute;inset:0;background:linear-gradient(90deg,#0e7757,#147858);-webkit-mask-image:linear-gradient(#000,transparent);mask-image:linear-gradient(#000,transparent)"></div></div>
<div class="cl" style="left:167.00px;top:303.45px;width:21.4px;height:21.3px;background:linear-gradient(90deg,#297558,#387658)"><div style="position:absolute;inset:0;background:linear-gradient(90deg,#267a59,#347c59);-webkit-mask-image:linear-gradient(#000,transparent);mask-image:linear-gradient(#000,transparent)"></div></div>
<div class="cl" style="left:190.00px;top:303.45px;width:21.4px;height:21.3px;background:linear-gradient(90deg,#4b7758,#597a57)"><div style="position:absolute;inset:0;background:linear-gradient(90deg,#477d59,#568059);-webkit-mask-image:linear-gradient(#000,transparent);mask-image:linear-gradient(#000,transparent)"></div></div>
<div class="cl" style="left:213.00px;top:303.45px;width:21.4px;height:21.3px;background:linear-gradient(90deg,#6d7f56,#7a8156)"><div style="position:absolute;inset:0;background:linear-gradient(90deg,#6a8558,#798858);-webkit-mask-image:linear-gradient(#000,transparent);mask-image:linear-gradient(#000,transparent)"></div></div>
<div class="cl" style="left:236.00px;top:303.45px;width:21.4px;height:21.3px;background:linear-gradient(90deg,#8a8456,#958656)"><div style="position:absolute;inset:0;background:linear-gradient(90deg,#898b58,#958d59);-webkit-mask-image:linear-gradient(#000,transparent);mask-image:linear-gradient(#000,transparent)"></div></div>
<div class="cl" style="left:259.00px;top:303.45px;width:21.4px;height:21.3px;background:linear-gradient(90deg,#a38b57,#af8e58)"><div style="position:absolute;inset:0;background:linear-gradient(90deg,#a3925a,#ad945a);-webkit-mask-image:linear-gradient(#000,transparent);mask-image:linear-gradient(#000,transparent)"></div></div>
<div class="cl" style="left:282.00px;top:303.45px;width:21.4px;height:21.3px;background:linear-gradient(90deg,#be9258,#c69559)"><div style="position:absolute;inset:0;background:linear-gradient(90deg,#bc985a,#c49a5a);-webkit-mask-image:linear-gradient(#000,transparent);mask-image:linear-gradient(#000,transparent)"></div></div>
<div class="cl" style="left:305.00px;top:303.45px;width:21.4px;height:21.3px;background:linear-gradient(90deg,#cc965a,#d3975a)"><div style="position:absolute;inset:0;background:linear-gradient(90deg,#ca9b5b,#d29d5b);-webkit-mask-image:linear-gradient(#000,transparent);mask-image:linear-gradient(#000,transparent)"></div></div>
<div class="cl" style="left:328.00px;top:303.45px;width:21.4px;height:21.3px;background:linear-gradient(90deg,#e09959,#e89b58)"><div style="position:absolute;inset:0;background:linear-gradient(90deg,#df9f5a,#e7a15a);-webkit-mask-image:linear-gradient(#000,transparent);mask-image:linear-gradient(#000,transparent)"></div></div>
<div class="cl" style="left:351.00px;top:303.45px;width:21.4px;height:21.3px;background:linear-gradient(90deg,#ed9d58,#f19e58)"><div style="position:absolute;inset:0;background:linear-gradient(90deg,#eca35a,#f0a559);-webkit-mask-image:linear-gradient(#000,transparent);mask-image:linear-gradient(#000,transparent)"></div></div>
<div class="cl" style="left:374.00px;top:303.45px;width:21.4px;height:21.3px;background:linear-gradient(90deg,#f69f58,#f9a058)"><div style="position:absolute;inset:0;background:linear-gradient(90deg,#f5a659,#f8a759);-webkit-mask-image:linear-gradient(#000,transparent);mask-image:linear-gradient(#000,transparent)"></div></div>
<div class="cl" style="left:121.00px;top:326.40px;width:21.4px;height:21.3px;background:linear-gradient(90deg,#0d614e,#0f634f)"><div style="position:absolute;inset:0;background:linear-gradient(90deg,#0e6851,#0e6a52);-webkit-mask-image:linear-gradient(#000,transparent);mask-image:linear-gradient(#000,transparent)"></div></div>
<div class="cl" style="left:144.00px;top:326.40px;width:21.4px;height:21.3px;background:linear-gradient(90deg,#0f6650,#1a6751)"><div style="position:absolute;inset:0;background:linear-gradient(90deg,#0e6c53,#176d54);-webkit-mask-image:linear-gradient(#000,transparent);mask-image:linear-gradient(#000,transparent)"></div></div>
<div class="cl" style="left:167.00px;top:326.40px;width:21.4px;height:21.3px;background:linear-gradient(90deg,#326853,#426953)"><div style="position:absolute;inset:0;background:linear-gradient(90deg,#2f6e55,#3e6f56);-webkit-mask-image:linear-gradient(#000,transparent);mask-image:linear-gradient(#000,transparent)"></div></div>
<div class="cl" style="left:190.00px;top:326.40px;width:21.4px;height:21.3px;background:linear-gradient(90deg,#526a53,#606d53)"><div style="position:absolute;inset:0;background:linear-gradient(90deg,#4f7056,#5e7355);-webkit-mask-image:linear-gradient(#000,transparent);mask-image:linear-gradient(#000,transparent)"></div></div>
<div class="cl" style="left:213.00px;top:326.40px;width:21.4px;height:21.3px;background:linear-gradient(90deg,#717150,#7e734f)"><div style="position:absolute;inset:0;background:linear-gradient(90deg,#6f7752,#7d7a52);-webkit-mask-image:linear-gradient(#000,transparent);mask-image:linear-gradient(#000,transparent)"></div></div>
<div class="cl" style="left:236.00px;top:326.40px;width:21.4px;height:21.3px;background:linear-gradient(90deg,#8c744f,#967650)"><div style="position:absolute;inset:0;background:linear-gradient(90deg,#8a7b52,#957d52);-webkit-mask-image:linear-gradient(#000,transparent);mask-image:linear-gradient(#000,transparent)"></div></div>
<div class="cl" style="left:259.00px;top:326.40px;width:21.4px;height:21.3px;background:linear-gradient(90deg,#a47b53,#b07e54)"><div style="position:absolute;inset:0;background:linear-gradient(90deg,#a38255,#af8556);-webkit-mask-image:linear-gradient(#000,transparent);mask-image:linear-gradient(#000,transparent)"></div></div>
<div class="cl" style="left:282.00px;top:326.40px;width:21.4px;height:21.3px;background:linear-gradient(90deg,#c28454,#ca8654)"><div style="position:absolute;inset:0;background:linear-gradient(90deg,#c08b56,#c98e56);-webkit-mask-image:linear-gradient(#000,transparent);mask-image:linear-gradient(#000,transparent)"></div></div>
<div class="cl" style="left:305.00px;top:326.40px;width:21.4px;height:21.3px;background:linear-gradient(90deg,#cf8856,#d68956)"><div style="position:absolute;inset:0;background:linear-gradient(90deg,#cd8f58,#d49058);-webkit-mask-image:linear-gradient(#000,transparent);mask-image:linear-gradient(#000,transparent)"></div></div>
<div class="cl" style="left:328.00px;top:326.40px;width:21.4px;height:21.3px;background:linear-gradient(90deg,#e38b54,#ea8d54)"><div style="position:absolute;inset:0;background:linear-gradient(90deg,#e29256,#e99456);-webkit-mask-image:linear-gradient(#000,transparent);mask-image:linear-gradient(#000,transparent)"></div></div>
<div class="cl" style="left:351.00px;top:326.40px;width:21.4px;height:21.3px;background:linear-gradient(90deg,#ee8f54,#f29054)"><div style="position:absolute;inset:0;background:linear-gradient(90deg,#ee9656,#f29756);-webkit-mask-image:linear-gradient(#000,transparent);mask-image:linear-gradient(#000,transparent)"></div></div>
<div class="cl" style="left:374.00px;top:326.40px;width:21.4px;height:21.3px;background:linear-gradient(90deg,#f69054,#fa9054)"><div style="position:absolute;inset:0;background:linear-gradient(90deg,#f69756,#fa9856);-webkit-mask-image:linear-gradient(#000,transparent);mask-image:linear-gradient(#000,transparent)"></div></div>
<div class="cl" style="left:121.00px;top:349.35px;width:21.4px;height:21.3px;background:linear-gradient(90deg,#0a4f45,#125147)"><div style="position:absolute;inset:0;background:linear-gradient(90deg,#0d5749,#0f594a);-webkit-mask-image:linear-gradient(#000,transparent);mask-image:linear-gradient(#000,transparent)"></div></div>
<div class="cl" style="left:144.00px;top:349.35px;width:21.4px;height:21.3px;background:linear-gradient(90deg,#195549,#24574a)"><div style="position:absolute;inset:0;background:linear-gradient(90deg,#165d4c,#205e4d);-webkit-mask-image:linear-gradient(#000,transparent);mask-image:linear-gradient(#000,transparent)"></div></div>
<div class="cl" style="left:167.00px;top:349.35px;width:21.4px;height:21.3px;background:linear-gradient(90deg,#39594b,#465a4c)"><div style="position:absolute;inset:0;background:linear-gradient(90deg,#35604e,#44614f);-webkit-mask-image:linear-gradient(#000,transparent);mask-image:linear-gradient(#000,transparent)"></div></div>
<div class="cl" style="left:190.00px;top:349.35px;width:21.4px;height:21.3px;background:linear-gradient(90deg,#555c4c,#625e4c)"><div style="position:absolute;inset:0;background:linear-gradient(90deg,#53634f,#61654f);-webkit-mask-image:linear-gradient(#000,transparent);mask-image:linear-gradient(#000,transparent)"></div></div>
<div class="cl" style="left:213.00px;top:349.35px;width:21.4px;height:21.3px;background:linear-gradient(90deg,#74624a,#81644a)"><div style="position:absolute;inset:0;background:linear-gradient(90deg,#73694d,#806b4c);-webkit-mask-image:linear-gradient(#000,transparent);mask-image:linear-gradient(#000,transparent)"></div></div>
<div class="cl" style="left:236.00px;top:349.35px;width:21.4px;height:21.3px;background:linear-gradient(90deg,#8e654a,#9a674a)"><div style="position:absolute;inset:0;background:linear-gradient(90deg,#8d6c4c,#986e4d);-webkit-mask-image:linear-gradient(#000,transparent);mask-image:linear-gradient(#000,transparent)"></div></div>
<div class="cl" style="left:259.00px;top:349.35px;width:21.4px;height:21.3px;background:linear-gradient(90deg,#a86b4c,#b46e4c)"><div style="position:absolute;inset:0;background:linear-gradient(90deg,#a6724f,#b37550);-webkit-mask-image:linear-gradient(#000,transparent);mask-image:linear-gradient(#000,transparent)"></div></div>
<div class="cl" style="left:282.00px;top:349.35px;width:21.4px;height:21.3px;background:linear-gradient(90deg,#c4734c,#cc744d)"><div style="position:absolute;inset:0;background:linear-gradient(90deg,#c27a50,#cb7c50);-webkit-mask-image:linear-gradient(#000,transparent);mask-image:linear-gradient(#000,transparent)"></div></div>
<div class="cl" style="left:305.00px;top:349.35px;width:21.4px;height:21.3px;background:linear-gradient(90deg,#d1764e,#d8784e)"><div style="position:absolute;inset:0;background:linear-gradient(90deg,#d07e51,#d88051);-webkit-mask-image:linear-gradient(#000,transparent);mask-image:linear-gradient(#000,transparent)"></div></div>
<div class="cl" style="left:328.00px;top:349.35px;width:21.4px;height:21.3px;background:linear-gradient(90deg,#e47a4d,#e97a4c)"><div style="position:absolute;inset:0;background:linear-gradient(90deg,#e38150,#ea8350);-webkit-mask-image:linear-gradient(#000,transparent);mask-image:linear-gradient(#000,transparent)"></div></div>
<div class="cl" style="left:351.00px;top:349.35px;width:21.4px;height:21.3px;background:linear-gradient(90deg,#ed7c4c,#f07d4c)"><div style="position:absolute;inset:0;background:linear-gradient(90deg,#ee8550,#f18650);-webkit-mask-image:linear-gradient(#000,transparent);mask-image:linear-gradient(#000,transparent)"></div></div>
<div class="cl" style="left:374.00px;top:349.35px;width:21.4px;height:21.3px;background:linear-gradient(90deg,#f57f4c,#f87f4c)"><div style="position:absolute;inset:0;background:linear-gradient(90deg,#f68750,#f98750);-webkit-mask-image:linear-gradient(#000,transparent);mask-image:linear-gradient(#000,transparent)"></div></div>
<div class="cl" style="left:121.00px;top:372.30px;width:21.4px;height:21.3px;background:linear-gradient(90deg,#083c3d,#154040)"><div style="position:absolute;inset:0;background:linear-gradient(90deg,#0a4541,#124743);-webkit-mask-image:linear-gradient(#000,transparent);mask-image:linear-gradient(#000,transparent)"></div></div>
<div class="cl" style="left:144.00px;top:372.30px;width:21.4px;height:21.3px;background:linear-gradient(90deg,#234542,#304744)"><div style="position:absolute;inset:0;background:linear-gradient(90deg,#204c45,#2c4e47);-webkit-mask-image:linear-gradient(#000,transparent);mask-image:linear-gradient(#000,transparent)"></div></div>
<div class="cl" style="left:167.00px;top:372.30px;width:21.4px;height:21.3px;background:linear-gradient(90deg,#404944,#4b4b45)"><div style="position:absolute;inset:0;background:linear-gradient(90deg,#3c5047,#495248);-webkit-mask-image:linear-gradient(#000,transparent);mask-image:linear-gradient(#000,transparent)"></div></div>
<div class="cl" style="left:190.00px;top:372.30px;width:21.4px;height:21.3px;background:linear-gradient(90deg,#584e45,#645045)"><div style="position:absolute;inset:0;background:linear-gradient(90deg,#565448,#635648);-webkit-mask-image:linear-gradient(#000,transparent);mask-image:linear-gradient(#000,transparent)"></div></div>
<div class="cl" style="left:213.00px;top:372.30px;width:21.4px;height:21.3px;background:linear-gradient(90deg,#765444,#845644)"><div style="position:absolute;inset:0;background:linear-gradient(90deg,#755a47,#825d46);-webkit-mask-image:linear-gradient(#000,transparent);mask-image:linear-gradient(#000,transparent)"></div></div>
<div class="cl" style="left:236.00px;top:372.30px;width:21.4px;height:21.3px;background:linear-gradient(90deg,#925744,#9e5944)"><div style="position:absolute;inset:0;background:linear-gradient(90deg,#905e46,#9c6047);-webkit-mask-image:linear-gradient(#000,transparent);mask-image:linear-gradient(#000,transparent)"></div></div>
<div class="cl" style="left:259.00px;top:372.30px;width:21.4px;height:21.3px;background:linear-gradient(90deg,#ae5c45,#b95d46)"><div style="position:absolute;inset:0;background:linear-gradient(90deg,#ab6248,#b86548);-webkit-mask-image:linear-gradient(#000,transparent);mask-image:linear-gradient(#000,transparent)"></div></div>
<div class="cl" style="left:282.00px;top:372.30px;width:21.4px;height:21.3px;background:linear-gradient(90deg,#c66146,#ce6346)"><div style="position:absolute;inset:0;background:linear-gradient(90deg,#c56948,#cd6a49);-webkit-mask-image:linear-gradient(#000,transparent);mask-image:linear-gradient(#000,transparent)"></div></div>
<div class="cl" style="left:305.00px;top:372.30px;width:21.4px;height:21.3px;background:linear-gradient(90deg,#d36446,#da6646)"><div style="position:absolute;inset:0;background:linear-gradient(90deg,#d26c49,#d96e49);-webkit-mask-image:linear-gradient(#000,transparent);mask-image:linear-gradient(#000,transparent)"></div></div>
<div class="cl" style="left:328.00px;top:372.30px;width:21.4px;height:21.3px;background:linear-gradient(90deg,#e46846,#e96846)"><div style="position:absolute;inset:0;background:linear-gradient(90deg,#e47049,#e97048);-webkit-mask-image:linear-gradient(#000,transparent);mask-image:linear-gradient(#000,transparent)"></div></div>
<div class="cl" style="left:351.00px;top:372.30px;width:21.4px;height:21.3px;background:linear-gradient(90deg,#ec6a46,#ee6b46)"><div style="position:absolute;inset:0;background:linear-gradient(90deg,#ec7248,#ef7448);-webkit-mask-image:linear-gradient(#000,transparent);mask-image:linear-gradient(#000,transparent)"></div></div>
<div class="cl" style="left:374.00px;top:372.30px;width:21.4px;height:21.3px;background:linear-gradient(90deg,#f36c46,#f66e46)"><div style="position:absolute;inset:0;background:linear-gradient(90deg,#f47548,#f77648);-webkit-mask-image:linear-gradient(#000,transparent);mask-image:linear-gradient(#000,transparent)"></div></div>
<div class="cl" style="left:121.00px;top:395.25px;width:21.4px;height:21.3px;background:linear-gradient(90deg,#082c37,#173039)"><div style="position:absolute;inset:0;background:linear-gradient(90deg,#083238,#15363b);-webkit-mask-image:linear-gradient(#000,transparent);mask-image:linear-gradient(#000,transparent)"></div></div>
<div class="cl" style="left:144.00px;top:395.25px;width:21.4px;height:21.3px;background:linear-gradient(90deg,#2b363c,#38393d)"><div style="position:absolute;inset:0;background:linear-gradient(90deg,#2a3c3e,#363e40);-webkit-mask-image:linear-gradient(#000,transparent);mask-image:linear-gradient(#000,transparent)"></div></div>
<div class="cl" style="left:167.00px;top:395.25px;width:21.4px;height:21.3px;background:linear-gradient(90deg,#453b3d,#4e3d3d)"><div style="position:absolute;inset:0;background:linear-gradient(90deg,#434140,#4e4240);-webkit-mask-image:linear-gradient(#000,transparent);mask-image:linear-gradient(#000,transparent)"></div></div>
<div class="cl" style="left:190.00px;top:395.25px;width:21.4px;height:21.3px;background:linear-gradient(90deg,#5a403e,#65423e)"><div style="position:absolute;inset:0;background:linear-gradient(90deg,#594641,#654841);-webkit-mask-image:linear-gradient(#000,transparent);mask-image:linear-gradient(#000,transparent)"></div></div>
<div class="cl" style="left:213.00px;top:395.25px;width:21.4px;height:21.3px;background:linear-gradient(90deg,#78463e,#86473e)"><div style="position:absolute;inset:0;background:linear-gradient(90deg,#784c41,#854e41);-webkit-mask-image:linear-gradient(#000,transparent);mask-image:linear-gradient(#000,transparent)"></div></div>
<div class="cl" style="left:236.00px;top:395.25px;width:21.4px;height:21.3px;background:linear-gradient(90deg,#94483e,#a14a3e)"><div style="position:absolute;inset:0;background:linear-gradient(90deg,#944f41,#a05041);-webkit-mask-image:linear-gradient(#000,transparent);mask-image:linear-gradient(#000,transparent)"></div></div>
<div class="cl" style="left:259.00px;top:395.25px;width:21.4px;height:21.3px;background:linear-gradient(90deg,#b24c3e,#bc4e3f)"><div style="position:absolute;inset:0;background:linear-gradient(90deg,#b05341,#bc5442);-webkit-mask-image:linear-gradient(#000,transparent);mask-image:linear-gradient(#000,transparent)"></div></div>
<div class="cl" style="left:282.00px;top:395.25px;width:21.4px;height:21.3px;background:linear-gradient(90deg,#c8503f,#cf523f)"><div style="position:absolute;inset:0;background:linear-gradient(90deg,#c75742,#ce5942);-webkit-mask-image:linear-gradient(#000,transparent);mask-image:linear-gradient(#000,transparent)"></div></div>
<div class="cl" style="left:305.00px;top:395.25px;width:21.4px;height:21.3px;background:linear-gradient(90deg,#d5543f,#db553f)"><div style="position:absolute;inset:0;background:linear-gradient(90deg,#d55b42,#db5c42);-webkit-mask-image:linear-gradient(#000,transparent);mask-image:linear-gradient(#000,transparent)"></div></div>
<div class="cl" style="left:328.00px;top:395.25px;width:21.4px;height:21.3px;background:linear-gradient(90deg,#e4563f,#e8573f)"><div style="position:absolute;inset:0;background:linear-gradient(90deg,#e45e42,#e95e42);-webkit-mask-image:linear-gradient(#000,transparent);mask-image:linear-gradient(#000,transparent)"></div></div>
<div class="cl" style="left:351.00px;top:395.25px;width:21.4px;height:21.3px;background:linear-gradient(90deg,#ea583f,#ed5a3f)"><div style="position:absolute;inset:0;background:linear-gradient(90deg,#eb6042,#ee6142);-webkit-mask-image:linear-gradient(#000,transparent);mask-image:linear-gradient(#000,transparent)"></div></div>
<div class="cl" style="left:374.00px;top:395.25px;width:21.4px;height:21.3px;background:linear-gradient(90deg,#f25c3f,#f55e3f)"><div style="position:absolute;inset:0;background:linear-gradient(90deg,#f26342,#f66442);-webkit-mask-image:linear-gradient(#000,transparent);mask-image:linear-gradient(#000,transparent)"></div></div>
<div class="cl" style="left:121.00px;top:418.20px;width:21.4px;height:21.3px;background:linear-gradient(90deg,#0d2537,#192837)"><div style="position:absolute;inset:0;background:linear-gradient(90deg,#0a2837,#192c38);-webkit-mask-image:linear-gradient(#000,transparent);mask-image:linear-gradient(#000,transparent)"></div></div>
<div class="cl" style="left:144.00px;top:418.20px;width:21.4px;height:21.3px;background:linear-gradient(90deg,#292b38,#352e37)"><div style="position:absolute;inset:0;background:linear-gradient(90deg,#292f39,#36333a);-webkit-mask-image:linear-gradient(#000,transparent);mask-image:linear-gradient(#000,transparent)"></div></div>
<div class="cl" style="left:167.00px;top:418.20px;width:21.4px;height:21.3px;background:linear-gradient(90deg,#443036,#4e3236)"><div style="position:absolute;inset:0;background:linear-gradient(90deg,#453539,#4e3739);-webkit-mask-image:linear-gradient(#000,transparent);mask-image:linear-gradient(#000,transparent)"></div></div>
<div class="cl" style="left:190.00px;top:418.20px;width:21.4px;height:21.3px;background:linear-gradient(90deg,#5a3437,#653537)"><div style="position:absolute;inset:0;background:linear-gradient(90deg,#5a393a,#653b3a);-webkit-mask-image:linear-gradient(#000,transparent);mask-image:linear-gradient(#000,transparent)"></div></div>
<div class="cl" style="left:213.00px;top:418.20px;width:21.4px;height:21.3px;background:linear-gradient(90deg,#763836,#843a35)"><div style="position:absolute;inset:0;background:linear-gradient(90deg,#763e39,#844039);-webkit-mask-image:linear-gradient(#000,transparent);mask-image:linear-gradient(#000,transparent)"></div></div>
<div class="cl" style="left:236.00px;top:418.20px;width:21.4px;height:21.3px;background:linear-gradient(90deg,#963c36,#a33d37)"><div style="position:absolute;inset:0;background:linear-gradient(90deg,#96423a,#a3443a);-webkit-mask-image:linear-gradient(#000,transparent);mask-image:linear-gradient(#000,transparent)"></div></div>
<div class="cl" style="left:259.00px;top:418.20px;width:21.4px;height:21.3px;background:linear-gradient(90deg,#b23e37,#bc4038)"><div style="position:absolute;inset:0;background:linear-gradient(90deg,#b2453a,#bc463b);-webkit-mask-image:linear-gradient(#000,transparent);mask-image:linear-gradient(#000,transparent)"></div></div>
<div class="cl" style="left:282.00px;top:418.20px;width:21.4px;height:21.3px;background:linear-gradient(90deg,#c64238,#cd4439)"><div style="position:absolute;inset:0;background:linear-gradient(90deg,#c6483b,#ce4a3b);-webkit-mask-image:linear-gradient(#000,transparent);mask-image:linear-gradient(#000,transparent)"></div></div>
<div class="cl" style="left:305.00px;top:418.20px;width:21.4px;height:21.3px;background:linear-gradient(90deg,#d4463a,#da473a)"><div style="position:absolute;inset:0;background:linear-gradient(90deg,#d54c3c,#db4e3c);-webkit-mask-image:linear-gradient(#000,transparent);mask-image:linear-gradient(#000,transparent)"></div></div>
<div class="cl" style="left:328.00px;top:418.20px;width:21.4px;height:21.3px;background:linear-gradient(90deg,#e1483b,#e5493b)"><div style="position:absolute;inset:0;background:linear-gradient(90deg,#e24f3d,#e6503d);-webkit-mask-image:linear-gradient(#000,transparent);mask-image:linear-gradient(#000,transparent)"></div></div>
<div class="cl" style="left:351.00px;top:418.20px;width:21.4px;height:21.3px;background:linear-gradient(90deg,#e84a3b,#eb4c3b)"><div style="position:absolute;inset:0;background:linear-gradient(90deg,#e9513d,#ec523d);-webkit-mask-image:linear-gradient(#000,transparent);mask-image:linear-gradient(#000,transparent)"></div></div>
<div class="cl" style="left:374.00px;top:418.20px;width:21.4px;height:21.3px;background:linear-gradient(90deg,#f04e3b,#f3503b)"><div style="position:absolute;inset:0;background:linear-gradient(90deg,#f1543d,#f4563d);-webkit-mask-image:linear-gradient(#000,transparent);mask-image:linear-gradient(#000,transparent)"></div></div>
<div class="cl" style="left:121.00px;top:441.15px;width:21.4px;height:21.3px;background:linear-gradient(90deg,#101d36,#1b1f35)"><div style="position:absolute;inset:0;background:linear-gradient(90deg,#0e2036,#1a2336);-webkit-mask-image:linear-gradient(#000,transparent);mask-image:linear-gradient(#000,transparent)"></div></div>
<div class="cl" style="left:144.00px;top:441.15px;width:21.4px;height:21.3px;background:linear-gradient(90deg,#292134,#342332)"><div style="position:absolute;inset:0;background:linear-gradient(90deg,#282535,#342834);-webkit-mask-image:linear-gradient(#000,transparent);mask-image:linear-gradient(#000,transparent)"></div></div>
<div class="cl" style="left:167.00px;top:441.15px;width:21.4px;height:21.3px;background:linear-gradient(90deg,#442630,#4e272f)"><div style="position:absolute;inset:0;background:linear-gradient(90deg,#442b32,#4e2d32);-webkit-mask-image:linear-gradient(#000,transparent);mask-image:linear-gradient(#000,transparent)"></div></div>
<div class="cl" style="left:190.00px;top:441.15px;width:21.4px;height:21.3px;background:linear-gradient(90deg,#5a2730,#64282f)"><div style="position:absolute;inset:0;background:linear-gradient(90deg,#5a2d33,#652e33);-webkit-mask-image:linear-gradient(#000,transparent);mask-image:linear-gradient(#000,transparent)"></div></div>
<div class="cl" style="left:213.00px;top:441.15px;width:21.4px;height:21.3px;background:linear-gradient(90deg,#732a2d,#832c2d)"><div style="position:absolute;inset:0;background:linear-gradient(90deg,#743031,#833230);-webkit-mask-image:linear-gradient(#000,transparent);mask-image:linear-gradient(#000,transparent)"></div></div>
<div class="cl" style="left:236.00px;top:441.15px;width:21.4px;height:21.3px;background:linear-gradient(90deg,#97302e,#a6312f)"><div style="position:absolute;inset:0;background:linear-gradient(90deg,#973631,#a53732);-webkit-mask-image:linear-gradient(#000,transparent);mask-image:linear-gradient(#000,transparent)"></div></div>
<div class="cl" style="left:259.00px;top:441.15px;width:21.4px;height:21.3px;background:linear-gradient(90deg,#b33130,#bc3231)"><div style="position:absolute;inset:0;background:linear-gradient(90deg,#b23733,#bc3834);-webkit-mask-image:linear-gradient(#000,transparent);mask-image:linear-gradient(#000,transparent)"></div></div>
<div class="cl" style="left:282.00px;top:441.15px;width:21.4px;height:21.3px;background:linear-gradient(90deg,#c43432,#cc3633)"><div style="position:absolute;inset:0;background:linear-gradient(90deg,#c43a35,#cc3c36);-webkit-mask-image:linear-gradient(#000,transparent);mask-image:linear-gradient(#000,transparent)"></div></div>
<div class="cl" style="left:305.00px;top:441.15px;width:21.4px;height:21.3px;background:linear-gradient(90deg,#d43834,#d93936)"><div style="position:absolute;inset:0;background:linear-gradient(90deg,#d43e37,#da4037);-webkit-mask-image:linear-gradient(#000,transparent);mask-image:linear-gradient(#000,transparent)"></div></div>
<div class="cl" style="left:328.00px;top:441.15px;width:21.4px;height:21.3px;background:linear-gradient(90deg,#de3a37,#e13b37)"><div style="position:absolute;inset:0;background:linear-gradient(90deg,#df4138,#e34239);-webkit-mask-image:linear-gradient(#000,transparent);mask-image:linear-gradient(#000,transparent)"></div></div>
<div class="cl" style="left:351.00px;top:441.15px;width:21.4px;height:21.3px;background:linear-gradient(90deg,#e53c37,#e93e37)"><div style="position:absolute;inset:0;background:linear-gradient(90deg,#e74339,#ea4439);-webkit-mask-image:linear-gradient(#000,transparent);mask-image:linear-gradient(#000,transparent)"></div></div>
<div class="cl" style="left:374.00px;top:441.15px;width:21.4px;height:21.3px;background:linear-gradient(90deg,#ee4037,#f14237)"><div style="position:absolute;inset:0;background:linear-gradient(90deg,#ef4639,#f24839);-webkit-mask-image:linear-gradient(#000,transparent);mask-image:linear-gradient(#000,transparent)"></div></div>
<div class="t" style="left:-18.30000000000001px;width:300px;text-align:center;top:181.35px;font-size:5.3px;color:#2a2a2a;font-weight:bold">100</div>
<div class="t" style="left:4.699999999999989px;width:300px;text-align:center;top:181.35px;font-size:5.3px;color:#2a2a2a;font-weight:bold">90</div>
<div class="t" style="left:27.69999999999999px;width:300px;text-align:center;top:181.35px;font-size:5.3px;color:#2a2a2a;font-weight:bold">80</div>
<div class="t" style="left:50.69999999999999px;width:300px;text-align:center;top:181.35px;font-size:5.3px;color:#2a2a2a;font-weight:bold">70</div>
<div class="t" style="left:73.69999999999999px;width:300px;text-align:center;top:181.35px;font-size:5.3px;color:#2a2a2a;font-weight:bold">60</div>
<div class="t" style="left:96.69999999999999px;width:300px;text-align:center;top:181.35px;font-size:5.3px;color:#2a2a2a;font-weight:bold">50</div>
<div class="t" style="left:119.69999999999999px;width:300px;text-align:center;top:181.35px;font-size:5.3px;color:#2a2a2a;font-weight:bold">40</div>
<div class="t" style="left:142.7px;width:300px;text-align:center;top:181.35px;font-size:5.3px;color:#2a2a2a;font-weight:bold">30</div>
<div class="t" style="left:165.7px;width:300px;text-align:center;top:181.35px;font-size:5.3px;color:#2a2a2a;font-weight:bold">20</div>
<div class="t" style="left:188.7px;width:300px;text-align:center;top:181.35px;font-size:5.3px;color:#2a2a2a;font-weight:bold">10</div>
<div class="t" style="left:211.7px;width:300px;text-align:center;top:181.35px;font-size:5.3px;color:#2a2a2a;font-weight:bold">5</div>
<div class="t" style="left:234.7px;width:300px;text-align:center;top:181.35px;font-size:5.3px;color:#2a2a2a;font-weight:bold">0</div>
<div class="t" style="left:399.8px;top:196.75px;font-size:5.3px;color:#2a2a2a;font-weight:bold">0</div>
<div class="t" style="left:399.8px;top:219.70px;font-size:5.3px;color:#2a2a2a;font-weight:bold">5</div>
<div class="t" style="left:399.8px;top:242.65px;font-size:5.3px;color:#2a2a2a;font-weight:bold">10</div>
<div class="t" style="left:399.8px;top:265.60px;font-size:5.3px;color:#2a2a2a;font-weight:bold">20</div>
<div class="t" style="left:399.8px;top:288.55px;font-size:5.3px;color:#2a2a2a;font-weight:bold">30</div>
<div class="t" style="left:399.8px;top:311.50px;font-size:5.3px;color:#2a2a2a;font-weight:bold">40</div>
<div class="t" style="left:399.8px;top:334.45px;font-size:5.3px;color:#2a2a2a;font-weight:bold">50</div>
<div class="t" style="left:399.8px;top:357.40px;font-size:5.3px;color:#2a2a2a;font-weight:bold">60</div>
<div class="t" style="left:399.8px;top:380.35px;font-size:5.3px;color:#2a2a2a;font-weight:bold">70</div>
<div class="t" style="left:399.8px;top:403.30px;font-size:5.3px;color:#2a2a2a;font-weight:bold">80</div>
<div class="t" style="left:399.8px;top:426.25px;font-size:5.3px;color:#2a2a2a;font-weight:bold">90</div>
<div class="t" style="left:399.8px;top:449.20px;font-size:5.3px;color:#2a2a2a;font-weight:bold">100</div>
<div class="cl" style="left:431.80px;top:188.20px;width:21.65px;height:21.5px;background:linear-gradient(90deg,#14965c,#13975b)"><div style="position:absolute;inset:0;background:linear-gradient(90deg,#15995d,#149a5c);-webkit-mask-image:linear-gradient(#000,transparent);mask-image:linear-gradient(#000,transparent)"></div></div>
<div class="cl" style="left:454.75px;top:188.20px;width:21.65px;height:21.5px;background:linear-gradient(90deg,#11985a,#119a5a)"><div style="position:absolute;inset:0;background:linear-gradient(90deg,#129b5b,#119d5b);-webkit-mask-image:linear-gradient(#000,transparent);mask-image:linear-gradient(#000,transparent)"></div></div>
<div class="cl" style="left:477.70px;top:188.20px;width:21.65px;height:21.5px;background:linear-gradient(90deg,#129d5d,#1ba05e)"><div style="position:absolute;inset:0;background:linear-gradient(90deg,#12a05e,#19a35f);-webkit-mask-image:linear-gradient(#000,transparent);mask-image:linear-gradient(#000,transparent)"></div></div>
<div class="cl" style="left:500.65px;top:188.20px;width:21.65px;height:21.5px;background:linear-gradient(90deg,#2ea561,#3ea862)"><div style="position:absolute;inset:0;background:linear-gradient(90deg,#2ca862,#3cab63);-webkit-mask-image:linear-gradient(#000,transparent);mask-image:linear-gradient(#000,transparent)"></div></div>
<div class="cl" style="left:523.60px;top:188.20px;width:21.65px;height:21.5px;background:linear-gradient(90deg,#53ad64,#64b165)"><div style="position:absolute;inset:0;background:linear-gradient(90deg,#51b065,#61b367);-webkit-mask-image:linear-gradient(#000,transparent);mask-image:linear-gradient(#000,transparent)"></div></div>
<div class="cl" style="left:546.55px;top:188.20px;width:21.65px;height:21.5px;background:linear-gradient(90deg,#79b566,#86b867)"><div style="position:absolute;inset:0;background:linear-gradient(90deg,#76b768,#84bb6a);-webkit-mask-image:linear-gradient(#000,transparent);mask-image:linear-gradient(#000,transparent)"></div></div>
<div class="cl" style="left:569.50px;top:188.20px;width:21.65px;height:21.5px;background:linear-gradient(90deg,#94bb68,#9ebf69)"><div style="position:absolute;inset:0;background:linear-gradient(90deg,#92be6b,#9cc26c);-webkit-mask-image:linear-gradient(#000,transparent);mask-image:linear-gradient(#000,transparent)"></div></div>
<div class="cl" style="left:592.45px;top:188.20px;width:21.65px;height:21.5px;background:linear-gradient(90deg,#acc46a,#b4c76a)"><div style="position:absolute;inset:0;background:linear-gradient(90deg,#aac76d,#b3cb6d);-webkit-mask-image:linear-gradient(#000,transparent);mask-image:linear-gradient(#000,transparent)"></div></div>
<div class="cl" style="left:615.40px;top:188.20px;width:21.65px;height:21.5px;background:linear-gradient(90deg,#bdc969,#c6cc69)"><div style="position:absolute;inset:0;background:linear-gradient(90deg,#bccd6c,#c4d16b);-webkit-mask-image:linear-gradient(#000,transparent);mask-image:linear-gradient(#000,transparent)"></div></div>
<div class="cl" style="left:638.35px;top:188.20px;width:21.65px;height:21.5px;background:linear-gradient(90deg,#d4d369,#dbd668)"><div style="position:absolute;inset:0;background:linear-gradient(90deg,#d2d86b,#dadb6b);-webkit-mask-image:linear-gradient(#000,transparent);mask-image:linear-gradient(#000,transparent)"></div></div>
<div class="cl" style="left:661.30px;top:188.20px;width:21.65px;height:21.5px;background:linear-gradient(90deg,#e0d767,#e4d867)"><div style="position:absolute;inset:0;background:linear-gradient(90deg,#dfdc6a,#e2dd69);-webkit-mask-image:linear-gradient(#000,transparent);mask-image:linear-gradient(#000,transparent)"></div></div>
<div class="cl" style="left:684.25px;top:188.20px;width:21.65px;height:21.5px;background:linear-gradient(90deg,#e8d967,#eadb67)"><div style="position:absolute;inset:0;background:linear-gradient(90deg,#e6de69,#e8df69);-webkit-mask-image:linear-gradient(#000,transparent);mask-image:linear-gradient(#000,transparent)"></div></div>
<div class="cl" style="left:431.80px;top:211.00px;width:21.65px;height:21.5px;background:linear-gradient(90deg,#13925b,#12935b)"><div style="position:absolute;inset:0;background:linear-gradient(90deg,#14935b,#13945b);-webkit-mask-image:linear-gradient(#000,transparent);mask-image:linear-gradient(#000,transparent)"></div></div>
<div class="cl" style="left:454.75px;top:211.00px;width:21.65px;height:21.5px;background:linear-gradient(90deg,#109459,#119559)"><div style="position:absolute;inset:0;background:linear-gradient(90deg,#119559,#11975a);-webkit-mask-image:linear-gradient(#000,transparent);mask-image:linear-gradient(#000,transparent)"></div></div>
<div class="cl" style="left:477.70px;top:211.00px;width:21.65px;height:21.5px;background:linear-gradient(90deg,#14995b,#1e9b5c)"><div style="position:absolute;inset:0;background:linear-gradient(90deg,#149b5c,#1c9e5d);-webkit-mask-image:linear-gradient(#000,transparent);mask-image:linear-gradient(#000,transparent)"></div></div>
<div class="cl" style="left:500.65px;top:211.00px;width:21.65px;height:21.5px;background:linear-gradient(90deg,#319f5e,#42a35f)"><div style="position:absolute;inset:0;background:linear-gradient(90deg,#30a25f,#41a560);-webkit-mask-image:linear-gradient(#000,transparent);mask-image:linear-gradient(#000,transparent)"></div></div>
<div class="cl" style="left:523.60px;top:211.00px;width:21.65px;height:21.5px;background:linear-gradient(90deg,#57a860,#69ab61)"><div style="position:absolute;inset:0;background:linear-gradient(90deg,#56aa61,#67ae62);-webkit-mask-image:linear-gradient(#000,transparent);mask-image:linear-gradient(#000,transparent)"></div></div>
<div class="cl" style="left:546.55px;top:211.00px;width:21.65px;height:21.5px;background:linear-gradient(90deg,#7eb062,#8cb362)"><div style="position:absolute;inset:0;background:linear-gradient(90deg,#7cb363,#89b564);-webkit-mask-image:linear-gradient(#000,transparent);mask-image:linear-gradient(#000,transparent)"></div></div>
<div class="cl" style="left:569.50px;top:211.00px;width:21.65px;height:21.5px;background:linear-gradient(90deg,#99b763,#a3b963)"><div style="position:absolute;inset:0;background:linear-gradient(90deg,#96b965,#a1bc66);-webkit-mask-image:linear-gradient(#000,transparent);mask-image:linear-gradient(#000,transparent)"></div></div>
<div class="cl" style="left:592.45px;top:211.00px;width:21.65px;height:21.5px;background:linear-gradient(90deg,#afbd64,#b7bf64)"><div style="position:absolute;inset:0;background:linear-gradient(90deg,#adc066,#b6c366);-webkit-mask-image:linear-gradient(#000,transparent);mask-image:linear-gradient(#000,transparent)"></div></div>
<div class="cl" style="left:615.40px;top:211.00px;width:21.65px;height:21.5px;background:linear-gradient(90deg,#c0c163,#c9c463)"><div style="position:absolute;inset:0;background:linear-gradient(90deg,#bfc566,#c8c865);-webkit-mask-image:linear-gradient(#000,transparent);mask-image:linear-gradient(#000,transparent)"></div></div>
<div class="cl" style="left:638.35px;top:211.00px;width:21.65px;height:21.5px;background:linear-gradient(90deg,#d6c964,#decc63)"><div style="position:absolute;inset:0;background:linear-gradient(90deg,#d5cd66,#dcd065);-webkit-mask-image:linear-gradient(#000,transparent);mask-image:linear-gradient(#000,transparent)"></div></div>
<div class="cl" style="left:661.30px;top:211.00px;width:21.65px;height:21.5px;background:linear-gradient(90deg,#e4cd62,#e7ce62)"><div style="position:absolute;inset:0;background:linear-gradient(90deg,#e2d264,#e6d364);-webkit-mask-image:linear-gradient(#000,transparent);mask-image:linear-gradient(#000,transparent)"></div></div>
<div class="cl" style="left:684.25px;top:211.00px;width:21.65px;height:21.5px;background:linear-gradient(90deg,#ebd062,#efd262)"><div style="position:absolute;inset:0;background:linear-gradient(90deg,#ead464,#ecd664);-webkit-mask-image:linear-gradient(#000,transparent);mask-image:linear-gradient(#000,transparent)"></div></div>
<div class="cl" style="left:431.80px;top:233.80px;width:21.65px;height:21.5px;background:linear-gradient(90deg,#128e59,#118f59)"><div style="position:absolute;inset:0;background:linear-gradient(90deg,#138f59,#129059);-webkit-mask-image:linear-gradient(#000,transparent);mask-image:linear-gradient(#000,transparent)"></div></div>
<div class="cl" style="left:454.75px;top:233.80px;width:21.65px;height:21.5px;background:linear-gradient(90deg,#109059,#129159)"><div style="position:absolute;inset:0;background:linear-gradient(90deg,#109159,#119359);-webkit-mask-image:linear-gradient(#000,transparent);mask-image:linear-gradient(#000,transparent)"></div></div>
<div class="cl" style="left:477.70px;top:233.80px;width:21.65px;height:21.5px;background:linear-gradient(90deg,#16935a,#20955a)"><div style="position:absolute;inset:0;background:linear-gradient(90deg,#15955a,#1f985b);-webkit-mask-image:linear-gradient(#000,transparent);mask-image:linear-gradient(#000,transparent)"></div></div>
<div class="cl" style="left:500.65px;top:233.80px;width:21.65px;height:21.5px;background:linear-gradient(90deg,#34995a,#469d5b)"><div style="position:absolute;inset:0;background:linear-gradient(90deg,#339c5b,#44a05c);-webkit-mask-image:linear-gradient(#000,transparent);mask-image:linear-gradient(#000,transparent)"></div></div>
<div class="cl" style="left:523.60px;top:233.80px;width:21.65px;height:21.5px;background:linear-gradient(90deg,#5da25d,#6ea55d)"><div style="position:absolute;inset:0;background:linear-gradient(90deg,#5ba55e,#6ca85f);-webkit-mask-image:linear-gradient(#000,transparent);mask-image:linear-gradient(#000,transparent)"></div></div>
<div class="cl" style="left:546.55px;top:233.80px;width:21.65px;height:21.5px;background:linear-gradient(90deg,#83aa5e,#92ad5e)"><div style="position:absolute;inset:0;background:linear-gradient(90deg,#81ad5f,#8fb060);-webkit-mask-image:linear-gradient(#000,transparent);mask-image:linear-gradient(#000,transparent)"></div></div>
<div class="cl" style="left:569.50px;top:233.80px;width:21.65px;height:21.5px;background:linear-gradient(90deg,#9fb25d,#a8b45d)"><div style="position:absolute;inset:0;background:linear-gradient(90deg,#9cb55f,#a6b760);-webkit-mask-image:linear-gradient(#000,transparent);mask-image:linear-gradient(#000,transparent)"></div></div>
<div class="cl" style="left:592.45px;top:233.80px;width:21.65px;height:21.5px;background:linear-gradient(90deg,#b2b65d,#b9b75d)"><div style="position:absolute;inset:0;background:linear-gradient(90deg,#b0b960,#b8bb60);-webkit-mask-image:linear-gradient(#000,transparent);mask-image:linear-gradient(#000,transparent)"></div></div>
<div class="cl" style="left:615.40px;top:233.80px;width:21.65px;height:21.5px;background:linear-gradient(90deg,#c2b95d,#cbbc5d)"><div style="position:absolute;inset:0;background:linear-gradient(90deg,#c1bd60,#cac060);-webkit-mask-image:linear-gradient(#000,transparent);mask-image:linear-gradient(#000,transparent)"></div></div>
<div class="cl" style="left:638.35px;top:233.80px;width:21.65px;height:21.5px;background:linear-gradient(90deg,#d8bf5e,#e0c15e)"><div style="position:absolute;inset:0;background:linear-gradient(90deg,#d7c360,#dfc660);-webkit-mask-image:linear-gradient(#000,transparent);mask-image:linear-gradient(#000,transparent)"></div></div>
<div class="cl" style="left:661.30px;top:233.80px;width:21.65px;height:21.5px;background:linear-gradient(90deg,#e7c35d,#ebc55c)"><div style="position:absolute;inset:0;background:linear-gradient(90deg,#e6c85f,#e9c95e);-webkit-mask-image:linear-gradient(#000,transparent);mask-image:linear-gradient(#000,transparent)"></div></div>
<div class="cl" style="left:684.25px;top:233.80px;width:21.65px;height:21.5px;background:linear-gradient(90deg,#efc65c,#f3c85c)"><div style="position:absolute;inset:0;background:linear-gradient(90deg,#edca5e,#f1cc5e);-webkit-mask-image:linear-gradient(#000,transparent);mask-image:linear-gradient(#000,transparent)"></div></div>
<div class="cl" style="left:431.80px;top:256.60px;width:21.65px;height:21.5px;background:linear-gradient(90deg,#118656,#108756)"><div style="position:absolute;inset:0;background:linear-gradient(90deg,#118b58,#118c58);-webkit-mask-image:linear-gradient(#000,transparent);mask-image:linear-gradient(#000,transparent)"></div></div>
<div class="cl" style="left:454.75px;top:256.60px;width:21.65px;height:21.5px;background:linear-gradient(90deg,#0f8856,#148a56)"><div style="position:absolute;inset:0;background:linear-gradient(90deg,#0f8d58,#118e58);-webkit-mask-image:linear-gradient(#000,transparent);mask-image:linear-gradient(#000,transparent)"></div></div>
<div class="cl" style="left:477.70px;top:256.60px;width:21.65px;height:21.5px;background:linear-gradient(90deg,#1a8c56,#288e56)"><div style="position:absolute;inset:0;background:linear-gradient(90deg,#179058,#229358);-webkit-mask-image:linear-gradient(#000,transparent);mask-image:linear-gradient(#000,transparent)"></div></div>
<div class="cl" style="left:500.65px;top:256.60px;width:21.65px;height:21.5px;background:linear-gradient(90deg,#3d9156,#4f9456)"><div style="position:absolute;inset:0;background:linear-gradient(90deg,#379658,#499a59);-webkit-mask-image:linear-gradient(#000,transparent);mask-image:linear-gradient(#000,transparent)"></div></div>
<div class="cl" style="left:523.60px;top:256.60px;width:21.65px;height:21.5px;background:linear-gradient(90deg,#669a57,#759e58)"><div style="position:absolute;inset:0;background:linear-gradient(90deg,#609f5a,#71a35b);-webkit-mask-image:linear-gradient(#000,transparent);mask-image:linear-gradient(#000,transparent)"></div></div>
<div class="cl" style="left:546.55px;top:256.60px;width:21.65px;height:21.5px;background:linear-gradient(90deg,#8aa258,#97a657)"><div style="position:absolute;inset:0;background:linear-gradient(90deg,#86a75b,#94ab5b);-webkit-mask-image:linear-gradient(#000,transparent);mask-image:linear-gradient(#000,transparent)"></div></div>
<div class="cl" style="left:569.50px;top:256.60px;width:21.65px;height:21.5px;background:linear-gradient(90deg,#a4aa56,#aeac56)"><div style="position:absolute;inset:0;background:linear-gradient(90deg,#a2af5a,#abb159);-webkit-mask-image:linear-gradient(#000,transparent);mask-image:linear-gradient(#000,transparent)"></div></div>
<div class="cl" style="left:592.45px;top:256.60px;width:21.65px;height:21.5px;background:linear-gradient(90deg,#b7ac56,#bfad56)"><div style="position:absolute;inset:0;background:linear-gradient(90deg,#b4b159,#bbb359);-webkit-mask-image:linear-gradient(#000,transparent);mask-image:linear-gradient(#000,transparent)"></div></div>
<div class="cl" style="left:615.40px;top:256.60px;width:21.65px;height:21.5px;background:linear-gradient(90deg,#c8af56,#d1b056)"><div style="position:absolute;inset:0;background:linear-gradient(90deg,#c4b559,#ccb75a);-webkit-mask-image:linear-gradient(#000,transparent);mask-image:linear-gradient(#000,transparent)"></div></div>
<div class="cl" style="left:638.35px;top:256.60px;width:21.65px;height:21.5px;background:linear-gradient(90deg,#deb357,#e4b457)"><div style="position:absolute;inset:0;background:linear-gradient(90deg,#dab95b,#e2bb5b);-webkit-mask-image:linear-gradient(#000,transparent);mask-image:linear-gradient(#000,transparent)"></div></div>
<div class="cl" style="left:661.30px;top:256.60px;width:21.65px;height:21.5px;background:linear-gradient(90deg,#ebb656,#efb856)"><div style="position:absolute;inset:0;background:linear-gradient(90deg,#e8bd5a,#edbf59);-webkit-mask-image:linear-gradient(#000,transparent);mask-image:linear-gradient(#000,transparent)"></div></div>
<div class="cl" style="left:684.25px;top:256.60px;width:21.65px;height:21.5px;background:linear-gradient(90deg,#f3ba56,#f7bc56)"><div style="position:absolute;inset:0;background:linear-gradient(90deg,#f1c159,#f5c359);-webkit-mask-image:linear-gradient(#000,transparent);mask-image:linear-gradient(#000,transparent)"></div></div>
<div class="cl" style="left:431.80px;top:279.40px;width:21.65px;height:21.5px;background:linear-gradient(90deg,#0e764f,#0e784f)"><div style="position:absolute;inset:0;background:linear-gradient(90deg,#0f7d52,#0e7e52);-webkit-mask-image:linear-gradient(#000,transparent);mask-image:linear-gradient(#000,transparent)"></div></div>
<div class="cl" style="left:454.75px;top:279.40px;width:21.65px;height:21.5px;background:linear-gradient(90deg,#0e7c4f,#167d4f)"><div style="position:absolute;inset:0;background:linear-gradient(90deg,#0e8252,#138352);-webkit-mask-image:linear-gradient(#000,transparent);mask-image:linear-gradient(#000,transparent)"></div></div>
<div class="cl" style="left:477.70px;top:279.40px;width:21.65px;height:21.5px;background:linear-gradient(90deg,#297d4f,#3b7e4f)"><div style="position:absolute;inset:0;background:linear-gradient(90deg,#268352,#348552);-webkit-mask-image:linear-gradient(#000,transparent);mask-image:linear-gradient(#000,transparent)"></div></div>
<div class="cl" style="left:500.65px;top:279.40px;width:21.65px;height:21.5px;background:linear-gradient(90deg,#55814f,#65844f)"><div style="position:absolute;inset:0;background:linear-gradient(90deg,#4f8852,#608b52);-webkit-mask-image:linear-gradient(#000,transparent);mask-image:linear-gradient(#000,transparent)"></div></div>
<div class="cl" style="left:523.60px;top:279.40px;width:21.65px;height:21.5px;background:linear-gradient(90deg,#74884f,#808b4f)"><div style="position:absolute;inset:0;background:linear-gradient(90deg,#6f8f52,#7e9352);-webkit-mask-image:linear-gradient(#000,transparent);mask-image:linear-gradient(#000,transparent)"></div></div>
<div class="cl" style="left:546.55px;top:279.40px;width:21.65px;height:21.5px;background:linear-gradient(90deg,#91924f,#9d954f)"><div style="position:absolute;inset:0;background:linear-gradient(90deg,#8f9952,#9c9d52);-webkit-mask-image:linear-gradient(#000,transparent);mask-image:linear-gradient(#000,transparent)"></div></div>
<div class="cl" style="left:569.50px;top:279.40px;width:21.65px;height:21.5px;background:linear-gradient(90deg,#aa974f,#b5994f)"><div style="position:absolute;inset:0;background:linear-gradient(90deg,#a99f52,#b3a152);-webkit-mask-image:linear-gradient(#000,transparent);mask-image:linear-gradient(#000,transparent)"></div></div>
<div class="cl" style="left:592.45px;top:279.40px;width:21.65px;height:21.5px;background:linear-gradient(90deg,#c39c4f,#cc9c4f)"><div style="position:absolute;inset:0;background:linear-gradient(90deg,#c0a352,#c8a452);-webkit-mask-image:linear-gradient(#000,transparent);mask-image:linear-gradient(#000,transparent)"></div></div>
<div class="cl" style="left:615.40px;top:279.40px;width:21.65px;height:21.5px;background:linear-gradient(90deg,#d49c4f,#dc9e4f)"><div style="position:absolute;inset:0;background:linear-gradient(90deg,#d1a452,#d9a552);-webkit-mask-image:linear-gradient(#000,transparent);mask-image:linear-gradient(#000,transparent)"></div></div>
<div class="cl" style="left:638.35px;top:279.40px;width:21.65px;height:21.5px;background:linear-gradient(90deg,#e8a04f,#eda14f)"><div style="position:absolute;inset:0;background:linear-gradient(90deg,#e4a852,#eba952);-webkit-mask-image:linear-gradient(#000,transparent);mask-image:linear-gradient(#000,transparent)"></div></div>
<div class="cl" style="left:661.30px;top:279.40px;width:21.65px;height:21.5px;background:linear-gradient(90deg,#efa14f,#f2a24f)"><div style="position:absolute;inset:0;background:linear-gradient(90deg,#eda952,#f1aa52);-webkit-mask-image:linear-gradient(#000,transparent);mask-image:linear-gradient(#000,transparent)"></div></div>
<div class="cl" style="left:684.25px;top:279.40px;width:21.65px;height:21.5px;background:linear-gradient(90deg,#f6a44f,#f9a54f)"><div style="position:absolute;inset:0;background:linear-gradient(90deg,#f5ac52,#f9ae52);-webkit-mask-image:linear-gradient(#000,transparent);mask-image:linear-gradient(#000,transparent)"></div></div>
<div class="cl" style="left:431.80px;top:302.20px;width:21.65px;height:21.5px;background:linear-gradient(90deg,#0e684b,#0e6a4b)"><div style="position:absolute;inset:0;background:linear-gradient(90deg,#0e6e4d,#0e704d);-webkit-mask-image:linear-gradient(#000,transparent);mask-image:linear-gradient(#000,transparent)"></div></div>
<div class="cl" style="left:454.75px;top:302.20px;width:21.65px;height:21.5px;background:linear-gradient(90deg,#0e6c4b,#176e4b)"><div style="position:absolute;inset:0;background:linear-gradient(90deg,#0e734d,#16754d);-webkit-mask-image:linear-gradient(#000,transparent);mask-image:linear-gradient(#000,transparent)"></div></div>
<div class="cl" style="left:477.70px;top:302.20px;width:21.65px;height:21.5px;background:linear-gradient(90deg,#2d6e4b,#3e704b)"><div style="position:absolute;inset:0;background:linear-gradient(90deg,#2c754d,#3e764d);-webkit-mask-image:linear-gradient(#000,transparent);mask-image:linear-gradient(#000,transparent)"></div></div>
<div class="cl" style="left:500.65px;top:302.20px;width:21.65px;height:21.5px;background:linear-gradient(90deg,#54744b,#63764b)"><div style="position:absolute;inset:0;background:linear-gradient(90deg,#547a4d,#647c4d);-webkit-mask-image:linear-gradient(#000,transparent);mask-image:linear-gradient(#000,transparent)"></div></div>
<div class="cl" style="left:523.60px;top:302.20px;width:21.65px;height:21.5px;background:linear-gradient(90deg,#727a4b,#7e7c4b)"><div style="position:absolute;inset:0;background:linear-gradient(90deg,#73804d,#80834d);-webkit-mask-image:linear-gradient(#000,transparent);mask-image:linear-gradient(#000,transparent)"></div></div>
<div class="cl" style="left:546.55px;top:302.20px;width:21.65px;height:21.5px;background:linear-gradient(90deg,#8d814b,#9a834b)"><div style="position:absolute;inset:0;background:linear-gradient(90deg,#8f884d,#9b8b4d);-webkit-mask-image:linear-gradient(#000,transparent);mask-image:linear-gradient(#000,transparent)"></div></div>
<div class="cl" style="left:569.50px;top:302.20px;width:21.65px;height:21.5px;background:linear-gradient(90deg,#a9854b,#b5874b)"><div style="position:absolute;inset:0;background:linear-gradient(90deg,#aa8d4d,#b58f4d);-webkit-mask-image:linear-gradient(#000,transparent);mask-image:linear-gradient(#000,transparent)"></div></div>
<div class="cl" style="left:592.45px;top:302.20px;width:21.65px;height:21.5px;background:linear-gradient(90deg,#c38b4b,#cc8d4b)"><div style="position:absolute;inset:0;background:linear-gradient(90deg,#c3934d,#cc944d);-webkit-mask-image:linear-gradient(#000,transparent);mask-image:linear-gradient(#000,transparent)"></div></div>
<div class="cl" style="left:615.40px;top:302.20px;width:21.65px;height:21.5px;background:linear-gradient(90deg,#d48e4b,#dc904b)"><div style="position:absolute;inset:0;background:linear-gradient(90deg,#d4954d,#dc964d);-webkit-mask-image:linear-gradient(#000,transparent);mask-image:linear-gradient(#000,transparent)"></div></div>
<div class="cl" style="left:638.35px;top:302.20px;width:21.65px;height:21.5px;background:linear-gradient(90deg,#e6924b,#eb934b)"><div style="position:absolute;inset:0;background:linear-gradient(90deg,#e6984d,#ec994d);-webkit-mask-image:linear-gradient(#000,transparent);mask-image:linear-gradient(#000,transparent)"></div></div>
<div class="cl" style="left:661.30px;top:302.20px;width:21.65px;height:21.5px;background:linear-gradient(90deg,#ee944b,#f1944b)"><div style="position:absolute;inset:0;background:linear-gradient(90deg,#ef9a4d,#f29b4d);-webkit-mask-image:linear-gradient(#000,transparent);mask-image:linear-gradient(#000,transparent)"></div></div>
<div class="cl" style="left:684.25px;top:302.20px;width:21.65px;height:21.5px;background:linear-gradient(90deg,#f4944b,#f7944b)"><div style="position:absolute;inset:0;background:linear-gradient(90deg,#f59b4d,#f89c4d);-webkit-mask-image:linear-gradient(#000,transparent);mask-image:linear-gradient(#000,transparent)"></div></div>
<div class="cl" style="left:431.80px;top:325.00px;width:21.65px;height:21.5px;background:linear-gradient(90deg,#0d5a47,#0f5c47)"><div style="position:absolute;inset:0;background:linear-gradient(90deg,#0e6049,#0e6249);-webkit-mask-image:linear-gradient(#000,transparent);mask-image:linear-gradient(#000,transparent)"></div></div>
<div class="cl" style="left:454.75px;top:325.00px;width:21.65px;height:21.5px;background:linear-gradient(90deg,#0f5e47,#1a5f47)"><div style="position:absolute;inset:0;background:linear-gradient(90deg,#0e6449,#176649);-webkit-mask-image:linear-gradient(#000,transparent);mask-image:linear-gradient(#000,transparent)"></div></div>
<div class="cl" style="left:477.70px;top:325.00px;width:21.65px;height:21.5px;background:linear-gradient(90deg,#326047,#426247)"><div style="position:absolute;inset:0;background:linear-gradient(90deg,#306749,#416849);-webkit-mask-image:linear-gradient(#000,transparent);mask-image:linear-gradient(#000,transparent)"></div></div>
<div class="cl" style="left:500.65px;top:325.00px;width:21.65px;height:21.5px;background:linear-gradient(90deg,#546647,#616847)"><div style="position:absolute;inset:0;background:linear-gradient(90deg,#536c49,#616e49);-webkit-mask-image:linear-gradient(#000,transparent);mask-image:linear-gradient(#000,transparent)"></div></div>
<div class="cl" style="left:523.60px;top:325.00px;width:21.65px;height:21.5px;background:linear-gradient(90deg,#726b47,#7d6d47)"><div style="position:absolute;inset:0;background:linear-gradient(90deg,#727249,#7e7449);-webkit-mask-image:linear-gradient(#000,transparent);mask-image:linear-gradient(#000,transparent)"></div></div>
<div class="cl" style="left:546.55px;top:325.00px;width:21.65px;height:21.5px;background:linear-gradient(90deg,#8b7047,#977147)"><div style="position:absolute;inset:0;background:linear-gradient(90deg,#8b7749,#987949);-webkit-mask-image:linear-gradient(#000,transparent);mask-image:linear-gradient(#000,transparent)"></div></div>
<div class="cl" style="left:569.50px;top:325.00px;width:21.65px;height:21.5px;background:linear-gradient(90deg,#a97447,#b57647)"><div style="position:absolute;inset:0;background:linear-gradient(90deg,#a97b49,#b57d49);-webkit-mask-image:linear-gradient(#000,transparent);mask-image:linear-gradient(#000,transparent)"></div></div>
<div class="cl" style="left:592.45px;top:325.00px;width:21.65px;height:21.5px;background:linear-gradient(90deg,#c27a47,#cb7c47)"><div style="position:absolute;inset:0;background:linear-gradient(90deg,#c38249,#cc8449);-webkit-mask-image:linear-gradient(#000,transparent);mask-image:linear-gradient(#000,transparent)"></div></div>
<div class="cl" style="left:615.40px;top:325.00px;width:21.65px;height:21.5px;background:linear-gradient(90deg,#d47f47,#db8047)"><div style="position:absolute;inset:0;background:linear-gradient(90deg,#d48749,#dc8849);-webkit-mask-image:linear-gradient(#000,transparent);mask-image:linear-gradient(#000,transparent)"></div></div>
<div class="cl" style="left:638.35px;top:325.00px;width:21.65px;height:21.5px;background:linear-gradient(90deg,#e48347,#e98447)"><div style="position:absolute;inset:0;background:linear-gradient(90deg,#e48a49,#ea8c49);-webkit-mask-image:linear-gradient(#000,transparent);mask-image:linear-gradient(#000,transparent)"></div></div>
<div class="cl" style="left:661.30px;top:325.00px;width:21.65px;height:21.5px;background:linear-gradient(90deg,#ed8547,#f08547)"><div style="position:absolute;inset:0;background:linear-gradient(90deg,#ee8d49,#f08d49);-webkit-mask-image:linear-gradient(#000,transparent);mask-image:linear-gradient(#000,transparent)"></div></div>
<div class="cl" style="left:684.25px;top:325.00px;width:21.65px;height:21.5px;background:linear-gradient(90deg,#f38447,#f58447)"><div style="position:absolute;inset:0;background:linear-gradient(90deg,#f38c49,#f68c49);-webkit-mask-image:linear-gradient(#000,transparent);mask-image:linear-gradient(#000,transparent)"></div></div>
<div class="cl" style="left:431.80px;top:347.80px;width:21.65px;height:21.5px;background:linear-gradient(90deg,#0a4e40,#125041)"><div style="position:absolute;inset:0;background:linear-gradient(90deg,#0d5443,#0f5643);-webkit-mask-image:linear-gradient(#000,transparent);mask-image:linear-gradient(#000,transparent)"></div></div>
<div class="cl" style="left:454.75px;top:347.80px;width:21.65px;height:21.5px;background:linear-gradient(90deg,#1a5241,#255242)"><div style="position:absolute;inset:0;background:linear-gradient(90deg,#165744,#215844);-webkit-mask-image:linear-gradient(#000,transparent);mask-image:linear-gradient(#000,transparent)"></div></div>
<div class="cl" style="left:477.70px;top:347.80px;width:21.65px;height:21.5px;background:linear-gradient(90deg,#395342,#475441)"><div style="position:absolute;inset:0;background:linear-gradient(90deg,#355944,#455a44);-webkit-mask-image:linear-gradient(#000,transparent);mask-image:linear-gradient(#000,transparent)"></div></div>
<div class="cl" style="left:500.65px;top:347.80px;width:21.65px;height:21.5px;background:linear-gradient(90deg,#575641,#635940)"><div style="position:absolute;inset:0;background:linear-gradient(90deg,#555d43,#626043);-webkit-mask-image:linear-gradient(#000,transparent);mask-image:linear-gradient(#000,transparent)"></div></div>
<div class="cl" style="left:523.60px;top:347.80px;width:21.65px;height:21.5px;background:linear-gradient(90deg,#735c40,#7e5d40)"><div style="position:absolute;inset:0;background:linear-gradient(90deg,#726243,#7e6443);-webkit-mask-image:linear-gradient(#000,transparent);mask-image:linear-gradient(#000,transparent)"></div></div>
<div class="cl" style="left:546.55px;top:347.80px;width:21.65px;height:21.5px;background:linear-gradient(90deg,#8b5e40,#976040)"><div style="position:absolute;inset:0;background:linear-gradient(90deg,#8b6643,#976843);-webkit-mask-image:linear-gradient(#000,transparent);mask-image:linear-gradient(#000,transparent)"></div></div>
<div class="cl" style="left:569.50px;top:347.80px;width:21.65px;height:21.5px;background:linear-gradient(90deg,#a96240,#b46440)"><div style="position:absolute;inset:0;background:linear-gradient(90deg,#a96a43,#b56c43);-webkit-mask-image:linear-gradient(#000,transparent);mask-image:linear-gradient(#000,transparent)"></div></div>
<div class="cl" style="left:592.45px;top:347.80px;width:21.65px;height:21.5px;background:linear-gradient(90deg,#c06840,#c86a41)"><div style="position:absolute;inset:0;background:linear-gradient(90deg,#c07043,#c97243);-webkit-mask-image:linear-gradient(#000,transparent);mask-image:linear-gradient(#000,transparent)"></div></div>
<div class="cl" style="left:615.40px;top:347.80px;width:21.65px;height:21.5px;background:linear-gradient(90deg,#d16c41,#d86d42)"><div style="position:absolute;inset:0;background:linear-gradient(90deg,#d27444,#d97644);-webkit-mask-image:linear-gradient(#000,transparent);mask-image:linear-gradient(#000,transparent)"></div></div>
<div class="cl" style="left:638.35px;top:347.80px;width:21.65px;height:21.5px;background:linear-gradient(90deg,#e16f42,#e67042)"><div style="position:absolute;inset:0;background:linear-gradient(90deg,#e27844,#e77944);-webkit-mask-image:linear-gradient(#000,transparent);mask-image:linear-gradient(#000,transparent)"></div></div>
<div class="cl" style="left:661.30px;top:347.80px;width:21.65px;height:21.5px;background:linear-gradient(90deg,#eb7142,#ee7242)"><div style="position:absolute;inset:0;background:linear-gradient(90deg,#ec7a44,#ef7a44);-webkit-mask-image:linear-gradient(#000,transparent);mask-image:linear-gradient(#000,transparent)"></div></div>
<div class="cl" style="left:684.25px;top:347.80px;width:21.65px;height:21.5px;background:linear-gradient(90deg,#f17142,#f47142)"><div style="position:absolute;inset:0;background:linear-gradient(90deg,#f27a44,#f47944);-webkit-mask-image:linear-gradient(#000,transparent);mask-image:linear-gradient(#000,transparent)"></div></div>
<div class="cl" style="left:431.80px;top:370.60px;width:21.65px;height:21.5px;background:linear-gradient(90deg,#084339,#16443a)"><div style="position:absolute;inset:0;background:linear-gradient(90deg,#0a483c,#124a3d);-webkit-mask-image:linear-gradient(#000,transparent);mask-image:linear-gradient(#000,transparent)"></div></div>
<div class="cl" style="left:454.75px;top:370.60px;width:21.65px;height:21.5px;background:linear-gradient(90deg,#24453b,#32463c)"><div style="position:absolute;inset:0;background:linear-gradient(90deg,#214b3e,#2d4c3e);-webkit-mask-image:linear-gradient(#000,transparent);mask-image:linear-gradient(#000,transparent)"></div></div>
<div class="cl" style="left:477.70px;top:370.60px;width:21.65px;height:21.5px;background:linear-gradient(90deg,#41453c,#4b453b)"><div style="position:absolute;inset:0;background:linear-gradient(90deg,#3c4b3e,#4a4c3e);-webkit-mask-image:linear-gradient(#000,transparent);mask-image:linear-gradient(#000,transparent)"></div></div>
<div class="cl" style="left:500.65px;top:370.60px;width:21.65px;height:21.5px;background:linear-gradient(90deg,#59473a,#64493a)"><div style="position:absolute;inset:0;background:linear-gradient(90deg,#584e3d,#64503c);-webkit-mask-image:linear-gradient(#000,transparent);mask-image:linear-gradient(#000,transparent)"></div></div>
<div class="cl" style="left:523.60px;top:370.60px;width:21.65px;height:21.5px;background:linear-gradient(90deg,#734c3a,#7e4c3a)"><div style="position:absolute;inset:0;background:linear-gradient(90deg,#73533c,#7e543c);-webkit-mask-image:linear-gradient(#000,transparent);mask-image:linear-gradient(#000,transparent)"></div></div>
<div class="cl" style="left:546.55px;top:370.60px;width:21.65px;height:21.5px;background:linear-gradient(90deg,#8b4d3a,#974e3a)"><div style="position:absolute;inset:0;background:linear-gradient(90deg,#8b553c,#97563c);-webkit-mask-image:linear-gradient(#000,transparent);mask-image:linear-gradient(#000,transparent)"></div></div>
<div class="cl" style="left:569.50px;top:370.60px;width:21.65px;height:21.5px;background:linear-gradient(90deg,#a9513a,#b4533a)"><div style="position:absolute;inset:0;background:linear-gradient(90deg,#a9593c,#b45b3c);-webkit-mask-image:linear-gradient(#000,transparent);mask-image:linear-gradient(#000,transparent)"></div></div>
<div class="cl" style="left:592.45px;top:370.60px;width:21.65px;height:21.5px;background:linear-gradient(90deg,#be563a,#c6573a)"><div style="position:absolute;inset:0;background:linear-gradient(90deg,#bf5e3c,#c7603d);-webkit-mask-image:linear-gradient(#000,transparent);mask-image:linear-gradient(#000,transparent)"></div></div>
<div class="cl" style="left:615.40px;top:370.60px;width:21.65px;height:21.5px;background:linear-gradient(90deg,#cf583b,#d6593c)"><div style="position:absolute;inset:0;background:linear-gradient(90deg,#d0613e,#d7623e);-webkit-mask-image:linear-gradient(#000,transparent);mask-image:linear-gradient(#000,transparent)"></div></div>
<div class="cl" style="left:638.35px;top:370.60px;width:21.65px;height:21.5px;background:linear-gradient(90deg,#df5b3c,#e45c3c)"><div style="position:absolute;inset:0;background:linear-gradient(90deg,#e0643e,#e5653e);-webkit-mask-image:linear-gradient(#000,transparent);mask-image:linear-gradient(#000,transparent)"></div></div>
<div class="cl" style="left:661.30px;top:370.60px;width:21.65px;height:21.5px;background:linear-gradient(90deg,#e85d3c,#eb5e3c)"><div style="position:absolute;inset:0;background:linear-gradient(90deg,#e9663e,#ec663e);-webkit-mask-image:linear-gradient(#000,transparent);mask-image:linear-gradient(#000,transparent)"></div></div>
<div class="cl" style="left:684.25px;top:370.60px;width:21.65px;height:21.5px;background:linear-gradient(90deg,#ef5e3c,#f25f3c)"><div style="position:absolute;inset:0;background:linear-gradient(90deg,#f0673e,#f3673e);-webkit-mask-image:linear-gradient(#000,transparent);mask-image:linear-gradient(#000,transparent)"></div></div>
<div class="cl" style="left:431.80px;top:393.40px;width:21.65px;height:21.5px;background:linear-gradient(90deg,#093633,#1a3734)"><div style="position:absolute;inset:0;background:linear-gradient(90deg,#083c36,#163d37);-webkit-mask-image:linear-gradient(#000,transparent);mask-image:linear-gradient(#000,transparent)"></div></div>
<div class="cl" style="left:454.75px;top:393.40px;width:21.65px;height:21.5px;background:linear-gradient(90deg,#303836,#3c3936)"><div style="position:absolute;inset:0;background:linear-gradient(90deg,#2c3e38,#393f39);-webkit-mask-image:linear-gradient(#000,transparent);mask-image:linear-gradient(#000,transparent)"></div></div>
<div class="cl" style="left:477.70px;top:393.40px;width:21.65px;height:21.5px;background:linear-gradient(90deg,#473836,#503836)"><div style="position:absolute;inset:0;background:linear-gradient(90deg,#443e39,#4e3e38);-webkit-mask-image:linear-gradient(#000,transparent);mask-image:linear-gradient(#000,transparent)"></div></div>
<div class="cl" style="left:500.65px;top:393.40px;width:21.65px;height:21.5px;background:linear-gradient(90deg,#5c3935,#673a34)"><div style="position:absolute;inset:0;background:linear-gradient(90deg,#5a3f37,#654036);-webkit-mask-image:linear-gradient(#000,transparent);mask-image:linear-gradient(#000,transparent)"></div></div>
<div class="cl" style="left:523.60px;top:393.40px;width:21.65px;height:21.5px;background:linear-gradient(90deg,#753c34,#803d34)"><div style="position:absolute;inset:0;background:linear-gradient(90deg,#744336,#7f4436);-webkit-mask-image:linear-gradient(#000,transparent);mask-image:linear-gradient(#000,transparent)"></div></div>
<div class="cl" style="left:546.55px;top:393.40px;width:21.65px;height:21.5px;background:linear-gradient(90deg,#8c3d34,#983e34)"><div style="position:absolute;inset:0;background:linear-gradient(90deg,#8b4436,#974536);-webkit-mask-image:linear-gradient(#000,transparent);mask-image:linear-gradient(#000,transparent)"></div></div>
<div class="cl" style="left:569.50px;top:393.40px;width:21.65px;height:21.5px;background:linear-gradient(90deg,#a94134,#b44334)"><div style="position:absolute;inset:0;background:linear-gradient(90deg,#a94836,#b44a36);-webkit-mask-image:linear-gradient(#000,transparent);mask-image:linear-gradient(#000,transparent)"></div></div>
<div class="cl" style="left:592.45px;top:393.40px;width:21.65px;height:21.5px;background:linear-gradient(90deg,#bc4434,#c44635)"><div style="position:absolute;inset:0;background:linear-gradient(90deg,#bd4c36,#c44c37);-webkit-mask-image:linear-gradient(#000,transparent);mask-image:linear-gradient(#000,transparent)"></div></div>
<div class="cl" style="left:615.40px;top:393.40px;width:21.65px;height:21.5px;background:linear-gradient(90deg,#cc4736,#d44837)"><div style="position:absolute;inset:0;background:linear-gradient(90deg,#cd4e38,#d44f39);-webkit-mask-image:linear-gradient(#000,transparent);mask-image:linear-gradient(#000,transparent)"></div></div>
<div class="cl" style="left:638.35px;top:393.40px;width:21.65px;height:21.5px;background:linear-gradient(90deg,#dc4937,#e24a37)"><div style="position:absolute;inset:0;background:linear-gradient(90deg,#dd5039,#e25139);-webkit-mask-image:linear-gradient(#000,transparent);mask-image:linear-gradient(#000,transparent)"></div></div>
<div class="cl" style="left:661.30px;top:393.40px;width:21.65px;height:21.5px;background:linear-gradient(90deg,#e64b37,#ea4c37)"><div style="position:absolute;inset:0;background:linear-gradient(90deg,#e75239,#ea5339);-webkit-mask-image:linear-gradient(#000,transparent);mask-image:linear-gradient(#000,transparent)"></div></div>
<div class="cl" style="left:684.25px;top:393.40px;width:21.65px;height:21.5px;background:linear-gradient(90deg,#ee4d37,#f24e37)"><div style="position:absolute;inset:0;background:linear-gradient(90deg,#ef5439,#f25439);-webkit-mask-image:linear-gradient(#000,transparent);mask-image:linear-gradient(#000,transparent)"></div></div>
<div class="cl" style="left:431.80px;top:416.20px;width:21.65px;height:21.5px;background:linear-gradient(90deg,#182a2c,#262b2d)"><div style="position:absolute;inset:0;background:linear-gradient(90deg,#102f2f,#213030);-webkit-mask-image:linear-gradient(#000,transparent);mask-image:linear-gradient(#000,transparent)"></div></div>
<div class="cl" style="left:454.75px;top:416.20px;width:21.65px;height:21.5px;background:linear-gradient(90deg,#392c2f,#432c30)"><div style="position:absolute;inset:0;background:linear-gradient(90deg,#343132,#413232);-webkit-mask-image:linear-gradient(#000,transparent);mask-image:linear-gradient(#000,transparent)"></div></div>
<div class="cl" style="left:477.70px;top:416.20px;width:21.65px;height:21.5px;background:linear-gradient(90deg,#4d2c30,#562d2f)"><div style="position:absolute;inset:0;background:linear-gradient(90deg,#4b3232,#543232);-webkit-mask-image:linear-gradient(#000,transparent);mask-image:linear-gradient(#000,transparent)"></div></div>
<div class="cl" style="left:500.65px;top:416.20px;width:21.65px;height:21.5px;background:linear-gradient(90deg,#612e2f,#6c2f2f)"><div style="position:absolute;inset:0;background:linear-gradient(90deg,#5f3332,#6a3431);-webkit-mask-image:linear-gradient(#000,transparent);mask-image:linear-gradient(#000,transparent)"></div></div>
<div class="cl" style="left:523.60px;top:416.20px;width:21.65px;height:21.5px;background:linear-gradient(90deg,#7a312f,#84312f)"><div style="position:absolute;inset:0;background:linear-gradient(90deg,#773631,#823731);-webkit-mask-image:linear-gradient(#000,transparent);mask-image:linear-gradient(#000,transparent)"></div></div>
<div class="cl" style="left:546.55px;top:416.20px;width:21.65px;height:21.5px;background:linear-gradient(90deg,#90312f,#9b322f)"><div style="position:absolute;inset:0;background:linear-gradient(90deg,#8e3731,#9a3831);-webkit-mask-image:linear-gradient(#000,transparent);mask-image:linear-gradient(#000,transparent)"></div></div>
<div class="cl" style="left:569.50px;top:416.20px;width:21.65px;height:21.5px;background:linear-gradient(90deg,#aa342f,#b4362f)"><div style="position:absolute;inset:0;background:linear-gradient(90deg,#a93a31,#b43c31);-webkit-mask-image:linear-gradient(#000,transparent);mask-image:linear-gradient(#000,transparent)"></div></div>
<div class="cl" style="left:592.45px;top:416.20px;width:21.65px;height:21.5px;background:linear-gradient(90deg,#bc372f,#c4392f)"><div style="position:absolute;inset:0;background:linear-gradient(90deg,#bc3d31,#c43f32);-webkit-mask-image:linear-gradient(#000,transparent);mask-image:linear-gradient(#000,transparent)"></div></div>
<div class="cl" style="left:615.40px;top:416.20px;width:21.65px;height:21.5px;background:linear-gradient(90deg,#cc3a30,#d43c31)"><div style="position:absolute;inset:0;background:linear-gradient(90deg,#cc4033,#d44133);-webkit-mask-image:linear-gradient(#000,transparent);mask-image:linear-gradient(#000,transparent)"></div></div>
<div class="cl" style="left:638.35px;top:416.20px;width:21.65px;height:21.5px;background:linear-gradient(90deg,#dc3d32,#e23e32)"><div style="position:absolute;inset:0;background:linear-gradient(90deg,#dc4234,#e24334);-webkit-mask-image:linear-gradient(#000,transparent);mask-image:linear-gradient(#000,transparent)"></div></div>
<div class="cl" style="left:661.30px;top:416.20px;width:21.65px;height:21.5px;background:linear-gradient(90deg,#e64033,#ea4133)"><div style="position:absolute;inset:0;background:linear-gradient(90deg,#e64535,#ea4635);-webkit-mask-image:linear-gradient(#000,transparent);mask-image:linear-gradient(#000,transparent)"></div></div>
<div class="cl" style="left:684.25px;top:416.20px;width:21.65px;height:21.5px;background:linear-gradient(90deg,#ee4333,#f24533)"><div style="position:absolute;inset:0;background:linear-gradient(90deg,#ee4835,#f24935);-webkit-mask-image:linear-gradient(#000,transparent);mask-image:linear-gradient(#000,transparent)"></div></div>
<div class="cl" style="left:431.80px;top:439.00px;width:21.65px;height:21.5px;background:linear-gradient(90deg,#261c26,#331d27)"><div style="position:absolute;inset:0;background:linear-gradient(90deg,#202329,#2e242a);-webkit-mask-image:linear-gradient(#000,transparent);mask-image:linear-gradient(#000,transparent)"></div></div>
<div class="cl" style="left:454.75px;top:439.00px;width:21.65px;height:21.5px;background:linear-gradient(90deg,#411e28,#4a2028)"><div style="position:absolute;inset:0;background:linear-gradient(90deg,#3c252b,#47252c);-webkit-mask-image:linear-gradient(#000,transparent);mask-image:linear-gradient(#000,transparent)"></div></div>
<div class="cl" style="left:477.70px;top:439.00px;width:21.65px;height:21.5px;background:linear-gradient(90deg,#532128,#5b2229)"><div style="position:absolute;inset:0;background:linear-gradient(90deg,#50262c,#59272b);-webkit-mask-image:linear-gradient(#000,transparent);mask-image:linear-gradient(#000,transparent)"></div></div>
<div class="cl" style="left:500.65px;top:439.00px;width:21.65px;height:21.5px;background:linear-gradient(90deg,#662329,#702429)"><div style="position:absolute;inset:0;background:linear-gradient(90deg,#64282b,#6e292b);-webkit-mask-image:linear-gradient(#000,transparent);mask-image:linear-gradient(#000,transparent)"></div></div>
<div class="cl" style="left:523.60px;top:439.00px;width:21.65px;height:21.5px;background:linear-gradient(90deg,#7e2529,#882529)"><div style="position:absolute;inset:0;background:linear-gradient(90deg,#7c2a2b,#862b2b);-webkit-mask-image:linear-gradient(#000,transparent);mask-image:linear-gradient(#000,transparent)"></div></div>
<div class="cl" style="left:546.55px;top:439.00px;width:21.65px;height:21.5px;background:linear-gradient(90deg,#942529,#9e2629)"><div style="position:absolute;inset:0;background:linear-gradient(90deg,#922b2b,#9d2c2c);-webkit-mask-image:linear-gradient(#000,transparent);mask-image:linear-gradient(#000,transparent)"></div></div>
<div class="cl" style="left:569.50px;top:439.00px;width:21.65px;height:21.5px;background:linear-gradient(90deg,#ab282a,#b42a2b)"><div style="position:absolute;inset:0;background:linear-gradient(90deg,#aa2e2d,#b42f2d);-webkit-mask-image:linear-gradient(#000,transparent);mask-image:linear-gradient(#000,transparent)"></div></div>
<div class="cl" style="left:592.45px;top:439.00px;width:21.65px;height:21.5px;background:linear-gradient(90deg,#bc2b2b,#c42c2b)"><div style="position:absolute;inset:0;background:linear-gradient(90deg,#bc302d,#c4322d);-webkit-mask-image:linear-gradient(#000,transparent);mask-image:linear-gradient(#000,transparent)"></div></div>
<div class="cl" style="left:615.40px;top:439.00px;width:21.65px;height:21.5px;background:linear-gradient(90deg,#cc2e2b,#d4302b)"><div style="position:absolute;inset:0;background:linear-gradient(90deg,#cc342d,#d4352e);-webkit-mask-image:linear-gradient(#000,transparent);mask-image:linear-gradient(#000,transparent)"></div></div>
<div class="cl" style="left:638.35px;top:439.00px;width:21.65px;height:21.5px;background:linear-gradient(90deg,#dc312c,#e2322e)"><div style="position:absolute;inset:0;background:linear-gradient(90deg,#dc362f,#e2382f);-webkit-mask-image:linear-gradient(#000,transparent);mask-image:linear-gradient(#000,transparent)"></div></div>
<div class="cl" style="left:661.30px;top:439.00px;width:21.65px;height:21.5px;background:linear-gradient(90deg,#e6342f,#ea372f)"><div style="position:absolute;inset:0;background:linear-gradient(90deg,#e63a30,#ea3b31);-webkit-mask-image:linear-gradient(#000,transparent);mask-image:linear-gradient(#000,transparent)"></div></div>
<div class="cl" style="left:684.25px;top:439.00px;width:21.65px;height:21.5px;background:linear-gradient(90deg,#ee392f,#f23b2f)"><div style="position:absolute;inset:0;background:linear-gradient(90deg,#ee3d31,#f23f31);-webkit-mask-image:linear-gradient(#000,transparent);mask-image:linear-gradient(#000,transparent)"></div></div>
<div class="t" style="left:292.5px;width:300px;text-align:center;top:180.85px;font-size:5.3px;color:#2a2a2a;font-weight:bold">100</div>
<div class="t" style="left:315.45px;width:300px;text-align:center;top:180.85px;font-size:5.3px;color:#2a2a2a;font-weight:bold">90</div>
<div class="t" style="left:338.4px;width:300px;text-align:center;top:180.85px;font-size:5.3px;color:#2a2a2a;font-weight:bold">80</div>
<div class="t" style="left:361.34999999999997px;width:300px;text-align:center;top:180.85px;font-size:5.3px;color:#2a2a2a;font-weight:bold">70</div>
<div class="t" style="left:384.30000000000007px;width:300px;text-align:center;top:180.85px;font-size:5.3px;color:#2a2a2a;font-weight:bold">60</div>
<div class="t" style="left:407.25px;width:300px;text-align:center;top:180.85px;font-size:5.3px;color:#2a2a2a;font-weight:bold">50</div>
<div class="t" style="left:430.20000000000005px;width:300px;text-align:center;top:180.85px;font-size:5.3px;color:#2a2a2a;font-weight:bold">40</div>
<div class="t" style="left:453.1500000000001px;width:300px;text-align:center;top:180.85px;font-size:5.3px;color:#2a2a2a;font-weight:bold">30</div>
<div class="t" style="left:476.1px;width:300px;text-align:center;top:180.85px;font-size:5.3px;color:#2a2a2a;font-weight:bold">20</div>
<div class="t" style="left:499.05000000000007px;width:300px;text-align:center;top:180.85px;font-size:5.3px;color:#2a2a2a;font-weight:bold">10</div>
<div class="t" style="left:522.0px;width:300px;text-align:center;top:180.85px;font-size:5.3px;color:#2a2a2a;font-weight:bold">5</div>
<div class="t" style="left:544.95px;width:300px;text-align:center;top:180.85px;font-size:5.3px;color:#2a2a2a;font-weight:bold">0</div>
<div class="t" style="left:710.0px;top:196.25px;font-size:5.3px;color:#2a2a2a;font-weight:bold">0</div>
<div class="t" style="left:710.0px;top:219.05px;font-size:5.3px;color:#2a2a2a;font-weight:bold">5</div>
<div class="t" style="left:710.0px;top:241.85px;font-size:5.3px;color:#2a2a2a;font-weight:bold">10</div>
<div class="t" style="left:710.0px;top:264.65px;font-size:5.3px;color:#2a2a2a;font-weight:bold">20</div>
<div class="t" style="left:710.0px;top:287.45px;font-size:5.3px;color:#2a2a2a;font-weight:bold">30</div>
<div class="t" style="left:710.0px;top:310.25px;font-size:5.3px;color:#2a2a2a;font-weight:bold">40</div>
<div class="t" style="left:710.0px;top:333.05px;font-size:5.3px;color:#2a2a2a;font-weight:bold">50</div>
<div class="t" style="left:710.0px;top:355.85px;font-size:5.3px;color:#2a2a2a;font-weight:bold">60</div>
<div class="t" style="left:710.0px;top:378.65px;font-size:5.3px;color:#2a2a2a;font-weight:bold">70</div>
<div class="t" style="left:710.0px;top:401.45px;font-size:5.3px;color:#2a2a2a;font-weight:bold">80</div>
<div class="t" style="left:710.0px;top:424.25px;font-size:5.3px;color:#2a2a2a;font-weight:bold">90</div>
<div class="t" style="left:710.0px;top:447.05px;font-size:5.3px;color:#2a2a2a;font-weight:bold">100</div>
<div class="t" style="left:108px;width:300px;text-align:center;top:472.40px;font-size:8.8px;color:#333;">1 3</div>
<div class="t" style="left:418px;width:300px;text-align:center;top:472.40px;font-size:8.8px;color:#333;">1 4</div>
<div class="a" style="left:176.0px;top:133.8px;width:31px;height:30.8px;background:linear-gradient(90deg,#1aa0e0,#9ad4f0 45%,#f0f4fa);border:0.9px solid #888"></div>
<div class="t" style="left:41.69999999999999px;width:300px;text-align:center;top:122.80px;font-size:4.8px;color:#333;">C</div>
<div class="t" style="left:41.69999999999999px;width:300px;text-align:center;top:128.60px;font-size:4.8px;color:#333;letter-spacing:0.6px">0〜100%</div>
<div class="a" style="left:220.5px;top:133.8px;width:31px;height:30.8px;background:linear-gradient(180deg,#fafafa,#f4b8c8 50%,#e8285c);border:0.9px solid #888"></div>
<div class="t" style="left:86.19999999999999px;width:300px;text-align:center;top:122.80px;font-size:4.8px;color:#333;">M</div>
<div class="t" style="left:86.19999999999999px;width:300px;text-align:center;top:128.60px;font-size:4.8px;color:#333;letter-spacing:0.6px">0〜100%</div>
<div class="a" style="left:265.0px;top:133.8px;width:31px;height:30.8px;background:#f6e070;border:0.9px solid #888"></div>
<div class="t" style="left:130.7px;width:300px;text-align:center;top:122.80px;font-size:4.8px;color:#333;">Y</div>
<div class="t" style="left:130.7px;width:300px;text-align:center;top:128.60px;font-size:4.8px;color:#333;letter-spacing:0.6px">70%</div>
<div class="a" style="left:309.5px;top:133.8px;width:31px;height:30.8px;background:#eef2f8;border:0.9px solid #888"></div>
<div class="t" style="left:175.2px;width:300px;text-align:center;top:122.80px;font-size:4.8px;color:#333;">K</div>
<div class="t" style="left:175.2px;width:300px;text-align:center;top:128.60px;font-size:4.8px;color:#333;letter-spacing:0.6px">0%</div>
<div class="a" style="left:487.5px;top:134px;width:30.5px;height:30.5px;background:linear-gradient(90deg,#1aa0e0,#9ad4f0 45%,#f0f4fa);border:0.9px solid #777"></div>
<svg class="a" style="left:350px;top:215px" width="45" height="45" viewBox="0 0 45 45"><g transform="translate(12.8,30.6) rotate(-42.5)"><rect x="-1.2" y="-2.3" width="15" height="4.6" rx="2.3" fill="#fff" stroke="#000" stroke-width="1.1"/><rect x="12.3" y="-4.6" width="3.8" height="9.2" rx="0.6" fill="#000"/><rect x="15" y="-2.9" width="9.6" height="5.8" rx="2.9" fill="#000"/></g></svg>
<!-- right panels -->
<div class="a" style="left:812px;top:31px;width:212px;height:515px;background:#454545;"></div>
<div class="a" style="left:812px;top:37px;width:38px;height:509px;background:#535353;"></div>
<div class="a" style="left:812px;top:147px;width:38px;height:1px;background:#424242;"></div>
<div class="t" style="left:842px;top:31.30px;font-size:5px;color:#888;">‹‹</div>
<div class="t" style="left:863.5px;top:31.30px;font-size:5px;color:#888;">››</div>
<svg class="a" style="left:817px;top:44px;" width="11" height="10" viewBox="0 0 12 11"><text x="0" y="9.5" font-size="10" fill="#d4d4d4" font-family="Liberation Sans">A</text><rect x="8" y="1" width="1" height="9" fill="#d4d4d4"/></svg>
<svg class="a" style="left:817px;top:59px;" width="11" height="10" viewBox="0 0 12 11"><path d="M3 1h6v9H7.5V2.5H6V10H4.5V6A2.5 2.5 0 0 1 3 1z" fill="#d4d4d4"/></svg>
<svg class="a" style="left:817px;top:74px;" width="11" height="10" viewBox="0 0 12 11"><text x="0" y="9.5" font-size="9" fill="#d4d4d4" font-family="Liberation Sans">A</text><path d="M5 1h5v9H9V2H8v8H7V5a2 2 0 0 1-2-4z" fill="#d4d4d4"/></svg>
<svg class="a" style="left:817px;top:88.5px;" width="11" height="10" viewBox="0 0 12 11"><path d="M4 1h6v9H8.5V2.5H7V10H5.5V6A2.5 2.5 0 0 1 4 1z" fill="#d4d4d4"/><circle cx="2.5" cy="8.5" r="2" fill="#d4d4d4"/></svg>
<svg class="a" style="left:817px;top:103.5px;" width="11" height="10" viewBox="0 0 12 11"><text x="2.5" y="10" font-size="10" fill="#d4d4d4" font-family="Liberation Sans">A</text><circle cx="2" cy="9" r="1.8" fill="none" stroke="#d4d4d4" stroke-width="0.8"/></svg>
<svg class="a" style="left:817px;top:119px;" width="11" height="10" viewBox="0 0 12 11"><path d="M10.5 1.5L5 7.5c-1 0-2.5.8-3 3 1.8 0 3-.8 3.6-2l.6-.7z" fill="#d4d4d4"/><text x="0" y="4.5" font-size="4.5" fill="#d4d4d4" font-family="Liberation Sans">B</text></svg>
<svg class="a" style="left:817px;top:133.8px;" width="11" height="10" viewBox="0 0 12 11"><path d="M1 3h9M1 8h9" stroke="#d4d4d4" stroke-width="1"/><rect x="6" y="1.5" width="2.5" height="3" fill="#d4d4d4"/><rect x="3" y="6.5" width="2.5" height="3" fill="#d4d4d4"/></svg>
<div class="a" style="left:852px;top:37px;width:19px;height:509px;background:#535353;"></div>
<div class="a" style="left:852.3px;top:37px;width:31px;height:163px;transform:scale(0.608);transform-origin:0 0">
<div class="a" style="left:0px;top:0px;width:31px;height:163px;background:#4b4b4b;"></div>
<div class="a" style="left:0px;top:35px;width:31px;height:1.2px;background:#3d3d3d;"></div>
<div class="a" style="left:0px;top:69px;width:31px;height:1.2px;background:#3d3d3d;"></div>
<div class="a" style="left:0px;top:104px;width:31px;height:1.2px;background:#3d3d3d;"></div>
<div class="a" style="left:0px;top:139px;width:31px;height:1.2px;background:#3d3d3d;"></div>
<svg class="a" style="left:5px;top:9px;" width="20" height="20" viewBox="0 0 20 20"><g fill="#e6e6e6"><rect x="1" y="3" width="1.8" height="1.6"/><rect x="3.8" y="3" width="3.6" height="1.6"/><rect x="1" y="6.4" width="1.8" height="1.6"/><rect x="3.8" y="6.4" width="3.6" height="1.6"/><rect x="1" y="9.8" width="1.8" height="1.6"/><rect x="3.8" y="9.8" width="3.6" height="1.6"/><circle cx="13" cy="6" r="2.8"/><rect x="11.6" y="8" width="2.8" height="4"/><rect x="8" y="12" width="10" height="3"/><rect x="8" y="16" width="10" height="1.3"/></g></svg>
<svg class="a" style="left:5px;top:43px;" width="20" height="20" viewBox="0 0 20 20"><path d="M4 4l12 12M16 4L5 15" stroke="#e6e6e6" stroke-width="2" fill="none"/><circle cx="4" cy="4" r="2.4" fill="#e6e6e6"/><circle cx="16" cy="16" r="2.3" fill="none" stroke="#e6e6e6" stroke-width="1.3"/><path d="M2 17l4-4 1.5 1.5-4 4z" fill="#e6e6e6"/></svg>
<svg class="a" style="left:9.5px;top:81px;" width="13" height="12" viewBox="0 0 13 12"><rect x="0.5" y="0.5" width="12" height="11" fill="#e6e6e6"/><g fill="#4b4b4b"><rect x="2" y="2" width="2.5" height="2.5"/><rect x="8.5" y="2" width="2.5" height="2.5"/><rect x="2" y="7.5" width="2.5" height="2.5"/><rect x="8.5" y="7.5" width="2.5" height="2.5"/><rect x="5.5" y="2" width="2" height="1"/><rect x="5.5" y="9" width="2" height="1"/><rect x="2" y="5.5" width="1" height="1"/><rect x="10" y="5.5" width="1" height="1"/><rect x="5" y="5" width="3" height="2"/></g></svg>
<svg class="a" style="left:10.5px;top:117px;" width="11" height="9" viewBox="0 0 11 9"><path d="M0.5 3.5h1.5V1h3v2.5h1V1h3v2.5h1.5V9h-10z" fill="#e6e6e6"/></svg>
</div>
<div class="a" style="left:873px;top:37px;width:151px;height:509px;background:#535353;"></div>
<div class="a" style="left:873px;top:37px;width:151px;height:103px">
<div class="a" style="left:0px;top:0px;width:151px;height:14px;background:#464646;"></div>
<div class="a" style="left:0px;top:0px;width:20.2px;height:14px;background:#535353;"></div>
<div class="a" style="left:59px;top:0.63px;width:1px;height:13.37px;background:#383838;"></div>
<div class="a" style="left:99px;top:0.63px;width:1px;height:13.37px;background:#383838;"></div>
<div class="a" style="left:0px;top:14px;width:151px;height:74.8px;background:#535353;"></div>
<div class="t" style="left:3.5px;top:4.27px;font-size:6.1px;color:#f2f2f2;font-weight:bold">情報</div>
<div class="t" style="left:26px;top:4.27px;font-size:6.1px;color:#bdbdbd;">ヒストリー</div>
<div class="t" style="left:65px;top:4.27px;font-size:6.1px;color:#bdbdbd;">アクション</div>
<svg class="a" style="left:143px;top:5.5px;" width="5.0" height="4.5" viewBox="0 0 10 9"><g fill="#b4b4b4"><rect x="0" y="0" width="10" height="1.4"/><rect x="0" y="2.4" width="10" height="1.4"/><rect x="0" y="4.8" width="10" height="1.4"/><rect x="0" y="7.2" width="10" height="1.4"/></g></svg>
<svg class="a" style="left:2.5px;top:29.5px;" width="8.82" height="8.82" viewBox="0 0 14 14"><g transform="translate(0,0.5)"><circle cx="11" cy="3.4" r="2.3" fill="#e6e6e6"/><path d="M7.6 4.2l2.8 2.8" stroke="#e6e6e6" stroke-width="2"/><path d="M8.8 6.8L3.4 12.2a1.3 1.3 0 0 1-1.9-1.9L7 4.8" fill="none" stroke="#e6e6e6" stroke-width="1.1"/><path d="M9.3 11.6h3.6l-1.8 1.8z" fill="#e6e6e6"/></g></svg>
<div class="t" style="left:16px;top:22.85px;font-size:6.3px;color:#e2e2e2;">R</div>
<div class="t" style="left:24.189999999999998px;top:22.85px;font-size:6.3px;color:#cfcfcf;">:</div>
<div class="t" style="left:-140.3px;width:200px;text-align:right;top:22.85px;font-size:6.3px;color:#eeeeee;">227</div>
<div class="t" style="left:16px;top:30.85px;font-size:6.3px;color:#e2e2e2;">G</div>
<div class="t" style="left:24.189999999999998px;top:30.85px;font-size:6.3px;color:#cfcfcf;">:</div>
<div class="t" style="left:-140.3px;width:200px;text-align:right;top:30.85px;font-size:6.3px;color:#eeeeee;">204</div>
<div class="t" style="left:16px;top:38.85px;font-size:6.3px;color:#e2e2e2;">B</div>
<div class="t" style="left:24.189999999999998px;top:38.85px;font-size:6.3px;color:#cfcfcf;">:</div>
<div class="t" style="left:-140.3px;width:200px;text-align:right;top:38.85px;font-size:6.3px;color:#eeeeee;">100</div>
<div class="t" style="left:12px;top:54.05px;font-size:6.3px;color:#e2e2e2;">8 bit</div>
<svg class="a" style="left:79px;top:29.5px;" width="8.82" height="8.82" viewBox="0 0 14 14"><g transform="translate(0,0.5)"><circle cx="11" cy="3.4" r="2.3" fill="#e6e6e6"/><path d="M7.6 4.2l2.8 2.8" stroke="#e6e6e6" stroke-width="2"/><path d="M8.8 6.8L3.4 12.2a1.3 1.3 0 0 1-1.9-1.9L7 4.8" fill="none" stroke="#e6e6e6" stroke-width="1.1"/><path d="M9.3 11.6h3.6l-1.8 1.8z" fill="#e6e6e6"/></g></svg>
<div class="t" style="left:90px;top:22.85px;font-size:6.3px;color:#e2e2e2;">C</div>
<div class="t" style="left:98.19px;top:22.85px;font-size:6.3px;color:#cfcfcf;">:</div>
<div class="t" style="left:-64.69999999999999px;width:200px;text-align:right;top:22.85px;font-size:6.3px;color:#eeeeee;">13%</div>
<div class="t" style="left:90px;top:30.85px;font-size:6.3px;color:#e2e2e2;">M</div>
<div class="t" style="left:98.19px;top:30.85px;font-size:6.3px;color:#cfcfcf;">:</div>
<div class="t" style="left:-64.69999999999999px;width:200px;text-align:right;top:30.85px;font-size:6.3px;color:#eeeeee;">22%</div>
<div class="t" style="left:90px;top:38.85px;font-size:6.3px;color:#e2e2e2;">Y</div>
<div class="t" style="left:98.19px;top:38.85px;font-size:6.3px;color:#cfcfcf;">:</div>
<div class="t" style="left:-64.69999999999999px;width:200px;text-align:right;top:38.85px;font-size:6.3px;color:#eeeeee;">71%</div>
<div class="t" style="left:90px;top:46.85px;font-size:6.3px;color:#e2e2e2;">K</div>
<div class="t" style="left:98.19px;top:46.85px;font-size:6.3px;color:#cfcfcf;">:</div>
<div class="t" style="left:-64.69999999999999px;width:200px;text-align:right;top:46.85px;font-size:6.3px;color:#eeeeee;">0%</div>
<div class="t" style="left:87px;top:54.05px;font-size:6.3px;color:#e2e2e2;">8 bit</div>
<div class="a" style="left:0px;top:65.6px;width:151px;height:0.756px;background:#474747;"></div>
<div class="a" style="left:74.6px;top:66.6px;width:0.756px;height:22.200000000000003px;background:#474747;"></div>
<svg class="a" style="left:2.5px;top:72px;" width="8.82" height="8.82" viewBox="0 0 14 14"><path d="M6.5 1.5v10M1.5 6.5h10" stroke="#e6e6e6" stroke-width="1.2"/><path d="M10 11h3.2l-1.6 1.8z" fill="#e6e6e6"/></svg>
<div class="t" style="left:16px;top:69.85px;font-size:6.3px;color:#e2e2e2;">X</div>
<div class="t" style="left:24.189999999999998px;top:69.85px;font-size:6.3px;color:#cfcfcf;">:</div>
<div class="t" style="left:-140.3px;width:200px;text-align:right;top:69.85px;font-size:6.3px;color:#eeeeee;">118.9</div>
<div class="t" style="left:16px;top:77.25px;font-size:6.3px;color:#e2e2e2;">Y</div>
<div class="t" style="left:24.189999999999998px;top:77.25px;font-size:6.3px;color:#cfcfcf;">:</div>
<div class="t" style="left:-140.3px;width:200px;text-align:right;top:77.25px;font-size:6.3px;color:#eeeeee;">64.8</div>
<svg class="a" style="left:78px;top:72.5px;" width="8.82" height="8.82" viewBox="0 0 14 14"><path d="M2.5 2.5v9.5h9.5V2.5z" fill="none" stroke="#e6e6e6" stroke-width="1"/><circle cx="12" cy="2.5" r="1.4" fill="#e6e6e6"/><circle cx="2.5" cy="12" r="1.4" fill="#e6e6e6"/></svg>
<div class="t" style="left:90px;top:69.85px;font-size:6.3px;color:#e2e2e2;">W</div>
<div class="t" style="left:98.19px;top:69.85px;font-size:6.3px;color:#cfcfcf;">:</div>
<div class="t" style="left:90px;top:77.25px;font-size:6.3px;color:#e2e2e2;">H</div>
<div class="t" style="left:98.19px;top:77.25px;font-size:6.3px;color:#cfcfcf;">:</div>
<div class="a" style="left:0px;top:88.8px;width:151px;height:14.7px;background:#3f3f3f;"></div>
<div class="a" style="left:0px;top:90.06px;width:32.8px;height:13.44px;background:#474747;"></div>
<div class="a" style="left:32.8px;top:90.06px;width:40.0px;height:13.44px;background:#535353;"></div>
<div class="t" style="left:5px;top:93.73px;font-size:6.1px;color:#bdbdbd;">色調補正</div>
<div class="t" style="left:37.5px;top:93.73px;font-size:6.1px;color:#f2f2f2;font-weight:bold">プロパティ</div>
<svg class="a" style="left:143px;top:94.52999999999999px;" width="5.0" height="4.5" viewBox="0 0 10 9"><g fill="#b4b4b4"><rect x="0" y="0" width="10" height="1.4"/><rect x="0" y="2.4" width="10" height="1.4"/><rect x="0" y="4.8" width="10" height="1.4"/><rect x="0" y="7.2" width="10" height="1.4"/></g></svg>
</div>
<svg class="a" style="left:1016px;top:33px;" width="5" height="3" viewBox="0 0 5 3"><path d="M0 0h1v3H0zM3 0h1v3H3z" fill="#888"/></svg>
<div class="a" style="left:873px;top:140px;width:151px;height:20px;background:#4d4d4d;"></div>
<div class="a" style="left:873px;top:160px;width:151px;height:0.8px;background:#464646;"></div>
<div class="a" style="left:879px;top:145px;width:11.5px;height:11.5px;background:#3a3a3a;border-radius:1px"></div>
<svg class="a" style="left:881px;top:146.5px;" width="8" height="9" viewBox="0 0 8 9"><path d="M1 0.5h4l2.5 2.5v5.5H1z" fill="none" stroke="#e0e0e0" stroke-width="0.9"/><path d="M5 0.5v2.5h2.5" fill="none" stroke="#e0e0e0" stroke-width="0.8"/></svg>
<div class="t" style="left:894px;top:147.90px;font-size:6.2px;color:#dcdcdc;">ドキュメント</div>
<div class="a" style="left:1017px;top:161px;width:5px;height:199px;background:#484848;border-radius:2.5px"></div>
<div class="a" style="left:1017px;top:161px;width:5px;height:163px;background:#666666;border-radius:2.5px"></div>
<svg class="a" style="left:875.5px;top:166.9px;" width="5" height="3.5" viewBox="0 0 5 3.5"><path d="M0.5 0.6l2 2 2-2" fill="none" stroke="#c8c8c8" stroke-width="0.8"/></svg>
<div class="t" style="left:884px;top:165.40px;font-size:6.2px;color:#e8e8e8;font-weight:bold">カンバス</div>
<div class="t" style="left:898px;top:178.90px;font-size:5.8px;color:#c8c8c8;">W</div>
<div class="a" style="left:908.5px;top:177.8px;width:28.3px;height:8.4px;background:#3d3d3d;"></div>
<div class="t" style="left:910px;top:179.10px;font-size:5.8px;color:#e6e6e6;">291.25 mr</div>
<div class="t" style="left:945px;top:178.90px;font-size:5.8px;color:#c8c8c8;">X</div>
<div class="a" style="left:952.3px;top:177.8px;width:27.8px;height:8.4px;background:#4a4a4a;"></div>
<div class="t" style="left:955px;top:179.20px;font-size:5.6px;color:#6a6a6a;">0 mr</div>
<div class="t" style="left:899px;top:192.40px;font-size:5.8px;color:#c8c8c8;">H</div>
<div class="a" style="left:908.5px;top:191.2px;width:28.3px;height:8.4px;background:#3d3d3d;"></div>
<div class="t" style="left:910px;top:192.50px;font-size:5.8px;color:#e6e6e6;">179.45 mr</div>
<div class="t" style="left:945.5px;top:192.40px;font-size:5.8px;color:#c8c8c8;">Y</div>
<div class="a" style="left:952.3px;top:191.2px;width:27.8px;height:8.4px;background:#4a4a4a;"></div>
<div class="t" style="left:955px;top:192.60px;font-size:5.6px;color:#6a6a6a;">0 mr</div>
<svg class="a" style="left:882.5px;top:183.5px;" width="5" height="10" viewBox="0 0 5 10"><circle cx="2.5" cy="2.5" r="1.8" fill="none" stroke="#bbb" stroke-width="0.8"/><circle cx="2.5" cy="7.5" r="1.8" fill="none" stroke="#bbb" stroke-width="0.8"/></svg>
<div class="a" style="left:909px;top:206px;width:10px;height:10px;background:#535353;border:0.7px solid #777"></div>
<svg class="a" style="left:910.5px;top:207px;" width="7" height="8" viewBox="0 0 7 8"><rect x="2" y="0.5" width="3" height="2.5" fill="#ddd"/><rect x="1" y="3.5" width="5" height="4" fill="#ddd"/></svg>
<div class="a" style="left:922.5px;top:205.5px;width:11px;height:11px;background:#3a3a3a;"></div>
<svg class="a" style="left:924px;top:207px;" width="8" height="8" viewBox="0 0 8 8"><rect x="0.5" y="0.5" width="7" height="7" fill="none" stroke="#ddd" stroke-width="0.8"/><circle cx="4" cy="3.5" r="1.3" fill="#ddd"/><rect x="2" y="5" width="4" height="2" fill="#ddd"/></svg>
<div class="t" style="left:907px;top:225.05px;font-size:5.9px;color:#d8d8d8;">解像度 : 600 pixel/inch</div>
<div class="t" style="left:889.5px;top:239.60px;font-size:5.8px;color:#bdbdbd;">モード</div>
<div class="a" style="left:908.5px;top:238px;width:72.3px;height:9px;background:#3d3d3d;"></div>
<div class="t" style="left:912px;top:239.70px;font-size:5.8px;color:#e6e6e6;">RGB カラー</div>
<svg class="a" style="left:975.5px;top:241.5px;" width="5" height="3.5" viewBox="0 0 5 3.5"><path d="M0.5 0.6l2 2 2-2" fill="none" stroke="#c8c8c8" stroke-width="0.8"/></svg>
<div class="a" style="left:908.5px;top:252.5px;width:72.3px;height:8.8px;background:#3d3d3d;"></div>
<div class="t" style="left:912px;top:254.10px;font-size:5.8px;color:#e6e6e6;">8 bit/チャンネル</div>
<svg class="a" style="left:975.5px;top:256px;" width="5" height="3.5" viewBox="0 0 5 3.5"><path d="M0.5 0.6l2 2 2-2" fill="none" stroke="#c8c8c8" stroke-width="0.8"/></svg>
<div class="t" style="left:894.5px;top:270.10px;font-size:5.8px;color:#bdbdbd;">塗り</div>
<div class="a" style="left:908px;top:268px;width:10.5px;height:9.5px;background:#4b4b4b;border:0.6px solid #5a5a5a"></div>
<div class="a" style="left:922px;top:268px;width:58.8px;height:9.5px;background:#4b4b4b;"></div>
<div class="t" style="left:927px;top:270.20px;font-size:5.6px;color:#707070;">背景色</div>
<div class="a" style="left:873px;top:282.5px;width:143px;height:0.9px;background:#474747;"></div>
<svg class="a" style="left:875.5px;top:290.4px;" width="5" height="3.5" viewBox="0 0 5 3.5"><path d="M0.5 0.6l2 2 2-2" fill="none" stroke="#c8c8c8" stroke-width="0.8"/></svg>
<div class="t" style="left:884px;top:288.90px;font-size:6.2px;color:#e8e8e8;font-weight:bold">定規とグリッド</div>
<div class="a" style="left:879px;top:302.5px;width:12px;height:12px;background:#3a3a3a;"></div>
<svg class="a" style="left:880.5px;top:304px;" width="9" height="9" viewBox="0 0 9 9"><path d="M1.5 8.5V1.5h7" fill="none" stroke="#e8e8e8" stroke-width="1.6"/></svg>
<svg class="a" style="left:898.5px;top:303.5px;" width="10" height="10" viewBox="0 0 10 10"><path d="M0.5 3.5h9M0.5 6.5h9M3.5 0.5v9M6.5 0.5v9" stroke="#cfcfcf" stroke-width="0.8"/><rect x="0.5" y="0.5" width="9" height="9" fill="none" stroke="#cfcfcf" stroke-width="0.8"/></svg>
<svg class="a" style="left:915px;top:303.5px;" width="10" height="10" viewBox="0 0 10 10"><rect x="0.5" y="0.5" width="9" height="9" rx="1" fill="none" stroke="#cfcfcf" stroke-width="0.8"/><circle cx="5" cy="5" r="3.2" fill="none" stroke="#cfcfcf" stroke-width="0.7" stroke-dasharray="1 0.8"/></svg>
<div class="a" style="left:940.5px;top:304px;width:40.3px;height:8.5px;background:#3d3d3d;"></div>
<div class="t" style="left:944px;top:305.40px;font-size:5.8px;color:#e6e6e6;">mm</div>
<svg class="a" style="left:975.5px;top:307px;" width="5" height="3.5" viewBox="0 0 5 3.5"><path d="M0.5 0.6l2 2 2-2" fill="none" stroke="#c8c8c8" stroke-width="0.8"/></svg>
<div class="a" style="left:873px;top:320px;width:143px;height:0.9px;background:#474747;"></div>
<svg class="a" style="left:875.5px;top:327.9px;" width="5" height="3.5" viewBox="0 0 5 3.5"><path d="M0.5 0.6l2 2 2-2" fill="none" stroke="#c8c8c8" stroke-width="0.8"/></svg>
<div class="t" style="left:884px;top:326.40px;font-size:6.2px;color:#e8e8e8;font-weight:bold">ガイド</div>
<svg class="a" style="left:879.5px;top:340px;" width="10" height="10" viewBox="0 0 10 10"><path d="M3 0.5v9M6 0.5v9M0.5 5h9" stroke="#999" stroke-width="0.8"/></svg>
<svg class="a" style="left:898px;top:340px;" width="11" height="11" viewBox="0 0 11 11"><path d="M0.5 3h8M0.5 6h5M3 0.5v9" stroke="#cfcfcf" stroke-width="0.8"/><rect x="6" y="6" width="4" height="4" fill="#ddd"/></svg>
<div class="a" style="left:914px;top:339px;width:12px;height:12px;background:#3a3a3a;"></div>
<svg class="a" style="left:915.5px;top:340.5px;" width="9" height="9" viewBox="0 0 9 9"><path d="M2.5 0.5v8M0.5 2.5h5" stroke="#e0e0e0" stroke-width="0.9"/><text x="5" y="8.5" font-size="5" fill="#e0e0e0" font-family="Liberation Sans">$</text></svg>
<div class="a" style="left:941px;top:341px;width:39.8px;height:9px;background:#3d3d3d;"></div>
<div class="a" style="left:944px;top:345.2px;width:26px;height:0.9px;background:#e6e6e6;"></div>
<svg class="a" style="left:975.5px;top:344.3px;" width="5" height="3.5" viewBox="0 0 5 3.5"><path d="M0.5 0.6l2 2 2-2" fill="none" stroke="#c8c8c8" stroke-width="0.8"/></svg>
<div class="a" style="left:873px;top:358px;width:151px;height:17px;background:#535353;"></div>
<div class="a" style="left:1016px;top:358px;width:8px;height:17px;background:#4a4a4a;"></div>
<div class="a" style="left:873px;top:375px;width:151px;height:1.2px;background:#3b3b3b;"></div>
<div class="a" style="left:873px;top:376px;width:151px;height:16px;background:#3f3f3f;"></div>
<div class="a" style="left:873px;top:376px;width:93px;height:16px;background:#474747;"></div>
<div class="a" style="left:873px;top:376px;width:32.7px;height:16px;background:#535353;"></div>
<div class="t" style="left:877px;top:381.10px;font-size:6.2px;color:#f0f0f0;font-weight:bold">レイヤー</div>
<div class="t" style="left:911px;top:381.10px;font-size:6.2px;color:#bdbdbd;">チャンネル</div>
<div class="t" style="left:950px;top:381.10px;font-size:6.2px;color:#bdbdbd;">パス</div>
<svg class="a" style="left:1015.5px;top:382px;" width="5" height="4.5" viewBox="0 0 10 9"><g fill="#9a9a9a"><rect x="0" y="0" width="10" height="1.4"/><rect x="0" y="2.4" width="10" height="1.4"/><rect x="0" y="4.8" width="10" height="1.4"/><rect x="0" y="7.2" width="10" height="1.4"/></g></svg>
<div class="a" style="left:873px;top:392px;width:151px;height:141.5px;background:#535353;"></div>
<div class="a" style="left:876px;top:397px;width:64px;height:10px;background:#4b4b4b;"></div>
<svg class="a" style="left:879px;top:399px;" width="6" height="6" viewBox="0 0 6 6"><circle cx="2.4" cy="2.4" r="1.8" fill="none" stroke="#888" stroke-width="0.8"/><path d="M3.7 3.7L5.5 5.5" stroke="#888" stroke-width="0.9"/></svg>
<div class="t" style="left:886px;top:399.30px;font-size:5.4px;color:#777;">種類</div>
<svg class="a" style="left:949.5px;top:397.5px;" width="9" height="9" viewBox="0 0 9 9"><rect x="0.5" y="1.5" width="8" height="6" fill="none" stroke="#888" stroke-width="0.8"/><path d="M2 6l2-2 2 2" stroke="#888" stroke-width="0.8" fill="none"/></svg>
<svg class="a" style="left:962.1px;top:397.5px;" width="9" height="9" viewBox="0 0 9 9"><circle cx="4.5" cy="4.5" r="3.5" fill="#888"/><path d="M4.5 1a3.5 3.5 0 0 1 0 7z" fill="#535353"/></svg>
<svg class="a" style="left:974.7px;top:397.5px;" width="9" height="9" viewBox="0 0 9 9"><path d="M1 1.5h7M4.5 1.5v7" stroke="#888" stroke-width="1.1"/></svg>
<svg class="a" style="left:987.3px;top:397.5px;" width="9" height="9" viewBox="0 0 9 9"><rect x="1" y="1" width="7" height="7" fill="none" stroke="#888" stroke-width="0.8"/></svg>
<svg class="a" style="left:999.9px;top:397.5px;" width="9" height="9" viewBox="0 0 9 9"><rect x="1" y="4" width="7" height="4.5" fill="#888"/><path d="M2.5 4V2.5a2 2 0 0 1 4 0V4" fill="none" stroke="#888" stroke-width="0.8"/></svg>
<div class="a" style="left:1017px;top:399px;width:4px;height:4px;background:#888;border-radius:50%"></div>
<div class="a" style="left:876px;top:412.5px;width:90px;height:10px;background:#4b4b4b;"></div>
<div class="t" style="left:879px;top:414.80px;font-size:5.4px;color:#777;">通常</div>
<div class="t" style="left:965px;top:414.70px;font-size:5.6px;color:#777;">不透明度 :</div>
<div class="a" style="left:992px;top:412.5px;width:21px;height:10px;background:#4b4b4b;"></div>
<div class="t" style="left:994px;top:414.80px;font-size:5.4px;color:#777;">100%</div>
<div class="a" style="left:873px;top:408px;width:151px;height:0.8px;background:#4a4a4a;"></div>
<div class="a" style="left:873px;top:424px;width:151px;height:0.8px;background:#4a4a4a;"></div>
<div class="t" style="left:876px;top:430.00px;font-size:5.6px;color:#8a8a8a;">ロック :</div>
<svg class="a" style="left:896.5px;top:428.5px;" width="9" height="9" viewBox="0 0 9 9"><rect x="1" y="1" width="7" height="7" fill="none" stroke="#999" stroke-width="0.8" stroke-dasharray="1.4 0.8"/></svg>
<svg class="a" style="left:908.1px;top:428.5px;" width="9" height="9" viewBox="0 0 9 9"><path d="M8 1L3 6l-1 2.5L4.5 7.5l5-5" fill="#999"/></svg>
<svg class="a" style="left:919.7px;top:428.5px;" width="9" height="9" viewBox="0 0 9 9"><path d="M4.5 0.5v8M0.5 4.5h8" stroke="#999" stroke-width="0.9"/></svg>
<svg class="a" style="left:931.3px;top:428.5px;" width="9" height="9" viewBox="0 0 9 9"><rect x="1" y="2" width="7" height="5" fill="none" stroke="#999" stroke-width="0.8"/></svg>
<svg class="a" style="left:942.9px;top:428.5px;" width="9" height="9" viewBox="0 0 9 9"><rect x="1.5" y="4" width="6" height="4.5" fill="#999"/><path d="M3 4V2.5a1.5 1.5 0 0 1 3 0V4" fill="none" stroke="#999" stroke-width="0.8"/></svg>
<div class="t" style="left:977px;top:430.00px;font-size:5.6px;color:#777;">塗り :</div>
<div class="a" style="left:992px;top:428px;width:21px;height:10px;background:#4b4b4b;"></div>
<div class="t" style="left:994px;top:430.30px;font-size:5.4px;color:#777;">100%</div>
<div class="a" style="left:888.8px;top:441.6px;width:127.2px;height:15px;background:#696969;"></div>
<svg class="a" style="left:877.5px;top:446px;" width="8" height="6" viewBox="0 0 8 6"><path d="M0.5 3C2 0.8 6 0.8 7.5 3 6 5.2 2 5.2 0.5 3z" fill="#eee"/><circle cx="4" cy="3" r="1.3" fill="#555"/></svg>
<div class="a" style="left:890px;top:443.3px;width:17.6px;height:12px;background:linear-gradient(90deg,#1a8a5a,#8aa050 40%,#e8a040 70%,#e84a30);border:0.8px solid #ddd"></div>
<div class="a" style="left:893px;top:446px;width:2.5px;height:9px;background:#e6e6e6;"></div>
<div class="a" style="left:900.5px;top:446px;width:2.5px;height:9px;background:#e6e6e6;"></div>
<div class="t" style="left:912px;top:446.10px;font-size:5.8px;color:#f0f0f0;font-weight:bold">背景</div>
<svg class="a" style="left:1001px;top:444.5px;" width="7" height="9" viewBox="0 0 7 9"><rect x="0.8" y="3.8" width="5.4" height="4.4" rx="0.6" fill="none" stroke="#e0e0e0" stroke-width="0.9"/><path d="M2 3.8V2.4a1.5 1.5 0 0 1 3 0v1.4" fill="none" stroke="#e0e0e0" stroke-width="0.9"/></svg>
<div class="a" style="left:1016px;top:392px;width:8px;height:141.5px;background:#4d4d4d;"></div>
<div class="a" style="left:873px;top:533.5px;width:151px;height:12.5px;background:#4a4a4a;"></div>
<svg class="a" style="left:915.5px;top:534.5px;" width="9" height="9" viewBox="0 0 9 9"><path d="M1 4.5h3M5 4.5h3" stroke="#999" stroke-width="0.9"/><rect x="0.5" y="2.5" width="4" height="4" rx="2" fill="none" stroke="#999" stroke-width="0.8"/><rect x="4.5" y="2.5" width="4" height="4" rx="2" fill="none" stroke="#999" stroke-width="0.8"/></svg>
<svg class="a" style="left:929.9px;top:534.5px;" width="9" height="9" viewBox="0 0 9 9"><text x="0.5" y="7.5" font-size="7" font-style="italic" fill="#999" font-family="Liberation Serif">fx</text></svg>
<svg class="a" style="left:944.3px;top:534.5px;" width="9" height="9" viewBox="0 0 9 9"><rect x="0.5" y="1.5" width="8" height="6" fill="#e0e0e0"/><circle cx="4.5" cy="4.5" r="1.8" fill="#4a4a4a"/></svg>
<svg class="a" style="left:958.7px;top:534.5px;" width="9" height="9" viewBox="0 0 9 9"><circle cx="4.5" cy="4.5" r="3.5" fill="#e0e0e0"/><path d="M4.5 1a3.5 3.5 0 0 1 0 7z" fill="#4a4a4a"/></svg>
<svg class="a" style="left:973.1px;top:534.5px;" width="9" height="9" viewBox="0 0 9 9"><path d="M0.5 2h3l1 1h4v5h-8z" fill="#e0e0e0"/></svg>
<svg class="a" style="left:987.5px;top:534.5px;" width="9" height="9" viewBox="0 0 9 9"><rect x="0.5" y="1" width="8" height="7" fill="none" stroke="#e0e0e0" stroke-width="0.8"/><path d="M4.5 3v3M3 4.5h3" stroke="#e0e0e0" stroke-width="0.8"/></svg>
<svg class="a" style="left:1001.9px;top:534.5px;" width="9" height="9" viewBox="0 0 9 9"><rect x="2" y="2" width="5" height="6.5" fill="#888"/><rect x="1" y="1" width="7" height="1" fill="#888"/></svg>
<div class="a" style="left:487px;top:77px;width:286px;height:204px;background:#535353;overflow:hidden">
<div class="a" style="left:0px;top:0px;width:286px;height:30.5px;background:#535353;"></div>
<div class="a" style="left:0px;top:29.5px;width:286px;height:1.2px;background:#484848;"></div>
<div class="a" style="left:121px;top:6px;width:39px;height:21px;background:#1d6fe3;border-radius:11px"></div>
<div class="t" style="left:-9.5px;width:300px;text-align:center;top:11.90px;font-size:9px;color:#ffffff;font-weight:bold">共有</div>
<svg class="a" style="left:172px;top:6px;" width="16" height="19" viewBox="0 0 16 19"><path d="M8 2.2c-2.9 0-4.4 2.3-4.4 4.8v4L1.8 13.6h12.4L12.4 11V7c0-2.5-1.5-4.8-4.4-4.8z" fill="#c4c4c4"/><circle cx="8" cy="15.6" r="1.7" fill="#c4c4c4"/></svg>
<svg class="a" style="left:199px;top:7.5px;" width="16" height="16" viewBox="0 0 16 16"><circle cx="6.5" cy="6.5" r="4.8" fill="none" stroke="#d2d2d2" stroke-width="1.6"/><path d="M10 10L14 14" stroke="#d2d2d2" stroke-width="1.9"/></svg>
<svg class="a" style="left:226px;top:5.5px;" width="18" height="20" viewBox="0 0 18 20"><path d="M9 6.2a3.7 3.7 0 0 0-2.3 6.7v2h4.6v-2A3.7 3.7 0 0 0 9 6.2z" fill="none" stroke="#dadada" stroke-width="1.4"/><rect x="7.3" y="16" width="3.4" height="2" fill="#dadada"/><path d="M9 1v2.5M2.8 3.8l1.6 1.4M15.2 3.8l-1.6 1.4M1 9.5h2.3M14.7 9.5H17" stroke="#dadada" stroke-width="1.2"/></svg>
<svg class="a" style="left:250px;top:9.5px;" width="18" height="15" viewBox="0 0 18 15"><rect x="1" y="1.3" width="15.5" height="11.4" fill="none" stroke="#d2d2d2" stroke-width="1.3"/><rect x="3" y="4" width="2" height="6" fill="#d2d2d2"/></svg>
<svg class="a" style="left:273px;top:12.5px;" width="8" height="6" viewBox="0 0 8 6"><path d="M1 1.5l3 3 3-3" fill="none" stroke="#c4c4c4" stroke-width="1.2"/></svg>
<div class="a" style="left:0px;top:30.5px;width:286px;height:10.5px;background:#424242;"></div>
<div class="t" style="left:31px;top:32.00px;font-size:8px;color:#c8c8c8;">‹‹</div>
<div class="t" style="left:1px;top:32.50px;font-size:7px;color:#a8a8a8;">‹</div>
<div class="t" style="left:272px;top:32.00px;font-size:8px;color:#b8b8b8;">››</div>
<div class="a" style="left:0px;top:41px;width:8px;height:163px;background:#4e4e4e;"></div>
<div class="a" style="left:8px;top:41px;width:3px;height:163px;background:#393939;"></div>
<div class="a" style="left:11px;top:41px;width:31px;height:163px">
<div class="a" style="left:0px;top:0px;width:31px;height:163px;background:#4b4b4b;"></div>
<div class="a" style="left:0px;top:35px;width:31px;height:1.2px;background:#3d3d3d;"></div>
<div class="a" style="left:0px;top:69px;width:31px;height:1.2px;background:#3d3d3d;"></div>
<div class="a" style="left:0px;top:104px;width:31px;height:1.2px;background:#3d3d3d;"></div>
<div class="a" style="left:0px;top:139px;width:31px;height:1.2px;background:#3d3d3d;"></div>
<svg class="a" style="left:5px;top:9px;" width="20" height="20" viewBox="0 0 20 20"><g fill="#e6e6e6"><rect x="1" y="3" width="1.8" height="1.6"/><rect x="3.8" y="3" width="3.6" height="1.6"/><rect x="1" y="6.4" width="1.8" height="1.6"/><rect x="3.8" y="6.4" width="3.6" height="1.6"/><rect x="1" y="9.8" width="1.8" height="1.6"/><rect x="3.8" y="9.8" width="3.6" height="1.6"/><circle cx="13" cy="6" r="2.8"/><rect x="11.6" y="8" width="2.8" height="4"/><rect x="8" y="12" width="10" height="3"/><rect x="8" y="16" width="10" height="1.3"/></g></svg>
<svg class="a" style="left:5px;top:43px;" width="20" height="20" viewBox="0 0 20 20"><path d="M4 4l12 12M16 4L5 15" stroke="#e6e6e6" stroke-width="2" fill="none"/><circle cx="4" cy="4" r="2.4" fill="#e6e6e6"/><circle cx="16" cy="16" r="2.3" fill="none" stroke="#e6e6e6" stroke-width="1.3"/><path d="M2 17l4-4 1.5 1.5-4 4z" fill="#e6e6e6"/></svg>
<svg class="a" style="left:9.5px;top:81px;" width="13" height="12" viewBox="0 0 13 12"><rect x="0.5" y="0.5" width="12" height="11" fill="#e6e6e6"/><g fill="#4b4b4b"><rect x="2" y="2" width="2.5" height="2.5"/><rect x="8.5" y="2" width="2.5" height="2.5"/><rect x="2" y="7.5" width="2.5" height="2.5"/><rect x="8.5" y="7.5" width="2.5" height="2.5"/><rect x="5.5" y="2" width="2" height="1"/><rect x="5.5" y="9" width="2" height="1"/><rect x="2" y="5.5" width="1" height="1"/><rect x="10" y="5.5" width="1" height="1"/><rect x="5" y="5" width="3" height="2"/></g></svg>
<svg class="a" style="left:10.5px;top:117px;" width="11" height="9" viewBox="0 0 11 9"><path d="M0.5 3.5h1.5V1h3v2.5h1V1h3v2.5h1.5V9h-10z" fill="#e6e6e6"/></svg>
</div>
<div class="a" style="left:42px;top:41px;width:3px;height:163px;background:#393939;"></div>
<div class="a" style="left:45px;top:41px;width:241px;height:163px">
<div class="a" style="left:0px;top:0px;width:241px;height:24px;background:#424242;"></div>
<div class="a" style="left:0px;top:0px;width:34px;height:24px;background:#535353;"></div>
<div class="a" style="left:94px;top:1px;width:1px;height:23px;background:#383838;"></div>
<div class="a" style="left:158px;top:1px;width:1px;height:23px;background:#383838;"></div>
<div class="a" style="left:0px;top:24px;width:241px;height:116.5px;background:#535353;"></div>
<div class="t" style="left:8px;top:7.70px;font-size:9.6px;color:#f2f2f2;font-weight:bold">情報</div>
<div class="t" style="left:41px;top:7.70px;font-size:9.6px;color:#bdbdbd;">ヒストリー</div>
<div class="t" style="left:104px;top:7.70px;font-size:9.6px;color:#bdbdbd;">アクション</div>
<svg class="a" style="left:226px;top:8px;" width="10" height="9" viewBox="0 0 10 9"><g fill="#b4b4b4"><rect x="0" y="0" width="10" height="1.4"/><rect x="0" y="2.4" width="10" height="1.4"/><rect x="0" y="4.8" width="10" height="1.4"/><rect x="0" y="7.2" width="10" height="1.4"/></g></svg>
<svg class="a" style="left:5px;top:46px;" width="14" height="14" viewBox="0 0 14 14"><g transform="translate(0,0.5)"><circle cx="11" cy="3.4" r="2.3" fill="#e6e6e6"/><path d="M7.6 4.2l2.8 2.8" stroke="#e6e6e6" stroke-width="2"/><path d="M8.8 6.8L3.4 12.2a1.3 1.3 0 0 1-1.9-1.9L7 4.8" fill="none" stroke="#e6e6e6" stroke-width="1.1"/><path d="M9.3 11.6h3.6l-1.8 1.8z" fill="#e6e6e6"/></g></svg>
<div class="t" style="left:25px;top:38.60px;font-size:10px;color:#e2e2e2;">R</div>
<div class="t" style="left:38px;top:38.60px;font-size:10px;color:#cfcfcf;">:</div>
<div class="t" style="left:-105px;width:200px;text-align:right;top:38.60px;font-size:10px;color:#eeeeee;">227</div>
<div class="t" style="left:25px;top:50.90px;font-size:10px;color:#e2e2e2;">G</div>
<div class="t" style="left:38px;top:50.90px;font-size:10px;color:#cfcfcf;">:</div>
<div class="t" style="left:-105px;width:200px;text-align:right;top:50.90px;font-size:10px;color:#eeeeee;">204</div>
<div class="t" style="left:25px;top:63.10px;font-size:10px;color:#e2e2e2;">B</div>
<div class="t" style="left:38px;top:63.10px;font-size:10px;color:#cfcfcf;">:</div>
<div class="t" style="left:-105px;width:200px;text-align:right;top:63.10px;font-size:10px;color:#eeeeee;">100</div>
<div class="t" style="left:18.5px;top:87.00px;font-size:10px;color:#e2e2e2;">8 bit</div>
<svg class="a" style="left:124px;top:46px;" width="14" height="14" viewBox="0 0 14 14"><g transform="translate(0,0.5)"><circle cx="11" cy="3.4" r="2.3" fill="#e6e6e6"/><path d="M7.6 4.2l2.8 2.8" stroke="#e6e6e6" stroke-width="2"/><path d="M8.8 6.8L3.4 12.2a1.3 1.3 0 0 1-1.9-1.9L7 4.8" fill="none" stroke="#e6e6e6" stroke-width="1.1"/><path d="M9.3 11.6h3.6l-1.8 1.8z" fill="#e6e6e6"/></g></svg>
<div class="t" style="left:144.5px;top:38.60px;font-size:10px;color:#e2e2e2;">C</div>
<div class="t" style="left:157.5px;top:38.60px;font-size:10px;color:#cfcfcf;">:</div>
<div class="t" style="left:18px;width:200px;text-align:right;top:38.60px;font-size:10px;color:#eeeeee;">13%</div>
<div class="t" style="left:144.5px;top:50.90px;font-size:10px;color:#e2e2e2;">M</div>
<div class="t" style="left:157.5px;top:50.90px;font-size:10px;color:#cfcfcf;">:</div>
<div class="t" style="left:18px;width:200px;text-align:right;top:50.90px;font-size:10px;color:#eeeeee;">22%</div>
<div class="t" style="left:144.5px;top:63.10px;font-size:10px;color:#e2e2e2;">Y</div>
<div class="t" style="left:157.5px;top:63.10px;font-size:10px;color:#cfcfcf;">:</div>
<div class="t" style="left:18px;width:200px;text-align:right;top:63.10px;font-size:10px;color:#eeeeee;">71%</div>
<div class="t" style="left:144.5px;top:75.30px;font-size:10px;color:#e2e2e2;">K</div>
<div class="t" style="left:157.5px;top:75.30px;font-size:10px;color:#cfcfcf;">:</div>
<div class="t" style="left:18px;width:200px;text-align:right;top:75.30px;font-size:10px;color:#eeeeee;">0%</div>
<div class="t" style="left:138px;top:87.00px;font-size:10px;color:#e2e2e2;">8 bit</div>
<div class="a" style="left:0px;top:103px;width:241px;height:1.2px;background:#474747;"></div>
<div class="a" style="left:119px;top:104px;width:1.2px;height:36.5px;background:#474747;"></div>
<svg class="a" style="left:4px;top:116px;" width="14" height="14" viewBox="0 0 14 14"><path d="M6.5 1.5v10M1.5 6.5h10" stroke="#e6e6e6" stroke-width="1.2"/><path d="M10 11h3.2l-1.6 1.8z" fill="#e6e6e6"/></svg>
<div class="t" style="left:25px;top:112.40px;font-size:10px;color:#e2e2e2;">X</div>
<div class="t" style="left:38px;top:112.40px;font-size:10px;color:#cfcfcf;">:</div>
<div class="t" style="left:-105px;width:200px;text-align:right;top:112.40px;font-size:10px;color:#eeeeee;">118.9</div>
<div class="t" style="left:25px;top:124.60px;font-size:10px;color:#e2e2e2;">Y</div>
<div class="t" style="left:38px;top:124.60px;font-size:10px;color:#cfcfcf;">:</div>
<div class="t" style="left:-105px;width:200px;text-align:right;top:124.60px;font-size:10px;color:#eeeeee;">64.8</div>
<svg class="a" style="left:124px;top:117.5px;" width="14" height="14" viewBox="0 0 14 14"><path d="M2.5 2.5v9.5h9.5V2.5z" fill="none" stroke="#e6e6e6" stroke-width="1"/><circle cx="12" cy="2.5" r="1.4" fill="#e6e6e6"/><circle cx="2.5" cy="12" r="1.4" fill="#e6e6e6"/></svg>
<div class="t" style="left:144.5px;top:112.40px;font-size:10px;color:#e2e2e2;">W</div>
<div class="t" style="left:157.5px;top:112.40px;font-size:10px;color:#cfcfcf;">:</div>
<div class="t" style="left:144.5px;top:124.60px;font-size:10px;color:#e2e2e2;">H</div>
<div class="t" style="left:157.5px;top:124.60px;font-size:10px;color:#cfcfcf;">:</div>
<div class="a" style="left:0px;top:140.5px;width:241px;height:22.5px;background:#3f3f3f;"></div>
<div class="a" style="left:0px;top:142.5px;width:53px;height:20.5px;background:#474747;"></div>
<div class="a" style="left:53px;top:142.5px;width:61px;height:20.5px;background:#535353;"></div>
<div class="t" style="left:8px;top:147.95px;font-size:9.6px;color:#bdbdbd;">色調補正</div>
<div class="t" style="left:60px;top:147.95px;font-size:9.6px;color:#f2f2f2;font-weight:bold">プロパティ</div>
<svg class="a" style="left:226px;top:148.25px;" width="10" height="9" viewBox="0 0 10 9"><g fill="#b4b4b4"><rect x="0" y="0" width="10" height="1.4"/><rect x="0" y="2.4" width="10" height="1.4"/><rect x="0" y="4.8" width="10" height="1.4"/><rect x="0" y="7.2" width="10" height="1.4"/></g></svg>
</div>
</div>
<svg class="a" style="left:0;top:0" width="1024" height="546" viewBox="0 0 1024 546">
  <defs><clipPath id="cp"><rect x="487" y="77" width="286" height="204"/></clipPath></defs>
  <line x1="709" y1="115" x2="960" y2="43.9" stroke="#e64a68" stroke-width="1.9"/>
  <line x1="752" y1="228.1" x2="985" y2="119.3" stroke="#e64a68" stroke-width="1.9"/>
  <circle cx="708.5" cy="181.6" r="60.9" fill="none" stroke="#ee4259" stroke-width="8.6" clip-path="url(#cp)"/>
  <circle cx="982.7" cy="75.8" r="37.7" fill="none" stroke="#ee4259" stroke-width="5.6"/>
</svg>
</body></html>
